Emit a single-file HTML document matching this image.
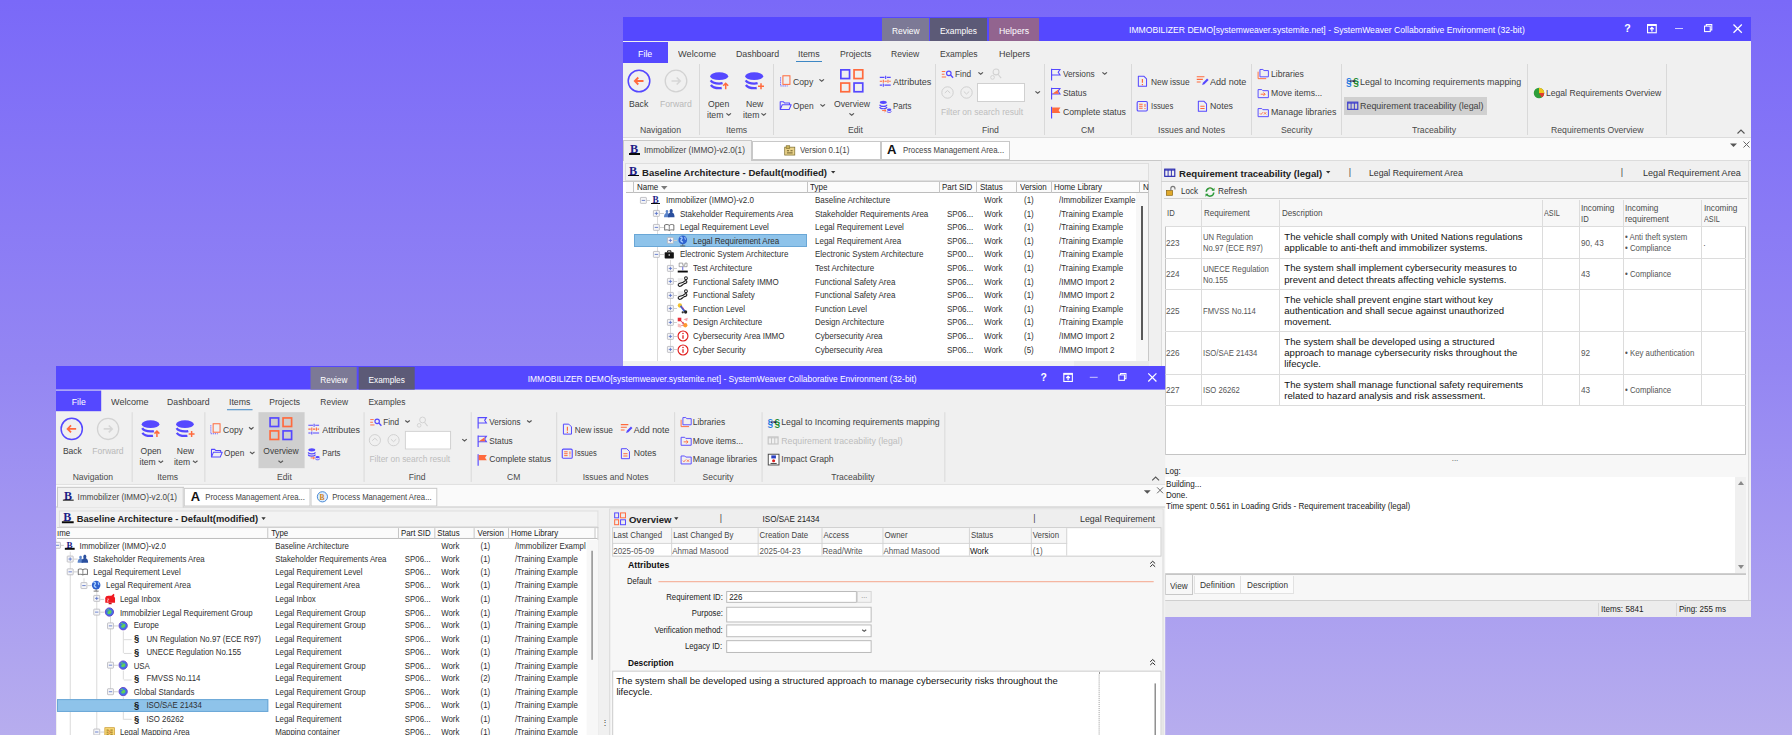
<!DOCTYPE html>
<html><head><meta charset="utf-8"><title>SystemWeaver</title><style>html,body{margin:0;padding:0}body{width:1792px;height:735px;overflow:hidden;position:relative;background:linear-gradient(180deg,#7a69f8 0%,#9486f3 50%,#b7adee 100%);font-family:"Liberation Sans",sans-serif}
.win{position:absolute;transform-origin:0 0;overflow:hidden}
.a{position:absolute}
.t{position:absolute;white-space:nowrap;transform-origin:0 50%}
svg{overflow:visible}</style></head><body>
<div class="win" style="left:622.5px;top:17px;width:1128.5px;height:599.5px;transform:scale(1);">
<div class="a " style="left:0px;top:0px;width:1128.5px;height:599.5px;background:#f0f0f0;"></div>
<div class="a " style="left:0px;top:0px;width:1128.5px;height:24px;background:#5548ff;"></div>
<div class="a " style="left:259.3px;top:0.6px;width:47.2px;height:23.4px;background:#7c7996;"></div>
<span class="t" style="left:269.15px;top:7.84px;font-size:9.6px;line-height:11.52px;color:#fff;transform:scaleX(0.874);">Review</span>
<div class="a " style="left:307.5px;top:0.6px;width:57.4px;height:23.4px;background:#5c5a77;"></div>
<span class="t" style="left:317.7px;top:7.84px;font-size:9.6px;line-height:11.52px;color:#fff;transform:scaleX(0.878);">Examples</span>
<div class="a " style="left:366.1px;top:0.6px;width:50.4px;height:23.4px;background:#92648f;"></div>
<span class="t" style="left:376.3px;top:7.84px;font-size:9.6px;line-height:11.52px;color:#fff;transform:scaleX(0.907);">Helpers</span>
<span class="t" style="left:506.5px;top:6.66px;font-size:9.4px;line-height:11.28px;color:#fff;transform:scaleX(0.919);">IMMOBILIZER DEMO[systemweaver.systemite.net] - SystemWeaver Collaborative Environment (32-bit)</span>
<span class="t" style="left:1001.76px;top:4.74px;font-size:10.6px;line-height:12.72px;color:#fff;transform:scaleX(1);font-weight:bold;">?</span>
<svg class="a" style="left:1024.5px;top:6.5px;" width="9.8" height="9.3" viewBox="0 0 9.8 9.3"><rect x=".55" y=".55" width="8.700" height="8.200" fill="none" stroke="#fff" stroke-width="1.100"/><path d="M.5 1.500h8.800" stroke="#fff" stroke-width="1"/><path d="M4.900 7.500V3.600M3.100 5.200l1.800-1.800 1.800 1.800" stroke="#fff" stroke-width="1.300" fill="none"/></svg>
<div class="a " style="left:1052.3px;top:10.85px;width:7.8px;height:1.1px;background:#cfcaff;"></div>
<svg class="a" style="left:1081.3px;top:7px;" width="8.4" height="8.2" viewBox="0 0 8.4 8.2"><rect x=".55" y="2.100" width="5.700" height="5.500" fill="none" stroke="#fff" stroke-width="1.050"/><path d="M2.300 2.100V.55h5.500v5.500H6.300" fill="none" stroke="#fff" stroke-width="1.050"/></svg>
<svg class="a" style="left:1110.7px;top:7px;" width="9.3" height="9.3" viewBox="0 0 9.3 9.3"><path d="M.5 .5l8.300 8.300M8.800 .5L.5 8.800" stroke="#fff" stroke-width="1.250"/></svg>
<div class="a " style="left:0px;top:25px;width:45.7px;height:20.6px;background:#5548ff;"></div>
<span class="t" style="left:15.65px;top:31.24px;font-size:9.6px;line-height:11.52px;color:#fff;transform:scaleX(0.925);">File</span>
<span class="t" style="left:55.8px;top:30.84px;font-size:9.6px;line-height:11.52px;color:#404040;transform:scaleX(0.959);">Welcome</span>
<span class="t" style="left:113.3px;top:30.84px;font-size:9.6px;line-height:11.52px;color:#404040;transform:scaleX(0.92);">Dashboard</span>
<span class="t" style="left:175.5px;top:30.84px;font-size:9.6px;line-height:11.52px;color:#404040;transform:scaleX(0.925);">Items</span>
<span class="t" style="left:217.2px;top:30.84px;font-size:9.6px;line-height:11.52px;color:#404040;transform:scaleX(0.903);">Projects</span>
<span class="t" style="left:268.8px;top:30.84px;font-size:9.6px;line-height:11.52px;color:#404040;transform:scaleX(0.896);">Review</span>
<span class="t" style="left:317.8px;top:30.84px;font-size:9.6px;line-height:11.52px;color:#404040;transform:scaleX(0.894);">Examples</span>
<span class="t" style="left:376px;top:30.84px;font-size:9.6px;line-height:11.52px;color:#404040;transform:scaleX(0.937);">Helpers</span>
<div class="a " style="left:173.5px;top:44px;width:26px;height:1.3px;background:#3d87c4;"></div>
<div class="a " style="left:76.8px;top:46.8px;width:1px;height:71.2px;background:#d9d9d9;"></div>
<div class="a " style="left:150.5px;top:46.8px;width:1px;height:71.2px;background:#d9d9d9;"></div>
<div class="a " style="left:312.7px;top:46.8px;width:1px;height:71.2px;background:#d9d9d9;"></div>
<div class="a " style="left:421.5px;top:46.8px;width:1px;height:71.2px;background:#d9d9d9;"></div>
<div class="a " style="left:508.6px;top:46.8px;width:1px;height:71.2px;background:#d9d9d9;"></div>
<div class="a " style="left:628.6px;top:46.8px;width:1px;height:71.2px;background:#d9d9d9;"></div>
<div class="a " style="left:718.3px;top:46.8px;width:1px;height:71.2px;background:#d9d9d9;"></div>
<div class="a " style="left:904.3px;top:46.8px;width:1px;height:71.2px;background:#d9d9d9;"></div>
<div class="a " style="left:1043.7px;top:46.8px;width:1px;height:71.2px;background:#d9d9d9;"></div>
<div class="a " style="left:0px;top:119.8px;width:1128.5px;height:1px;background:#dcdcdc;"></div>
<span class="t" style="left:17.16px;top:107.16px;font-size:9.4px;line-height:11.28px;color:#4a4a4a;transform:scaleX(0.925);">Navigation</span>
<span class="t" style="left:103.37px;top:107.16px;font-size:9.4px;line-height:11.28px;color:#4a4a4a;transform:scaleX(0.925);">Items</span>
<span class="t" style="left:225.01px;top:107.16px;font-size:9.4px;line-height:11.28px;color:#4a4a4a;transform:scaleX(0.925);">Edit</span>
<span class="t" style="left:359.24px;top:107.16px;font-size:9.4px;line-height:11.28px;color:#4a4a4a;transform:scaleX(0.925);">Find</span>
<span class="t" style="left:458.74px;top:107.16px;font-size:9.4px;line-height:11.28px;color:#4a4a4a;transform:scaleX(0.925);">CM</span>
<span class="t" style="left:535.91px;top:107.16px;font-size:9.4px;line-height:11.28px;color:#4a4a4a;transform:scaleX(0.925);">Issues and Notes</span>
<span class="t" style="left:658.39px;top:107.16px;font-size:9.4px;line-height:11.28px;color:#4a4a4a;transform:scaleX(0.925);">Security</span>
<span class="t" style="left:789.43px;top:107.16px;font-size:9.4px;line-height:11.28px;color:#4a4a4a;transform:scaleX(0.925);">Traceability</span>
<span class="t" style="left:928.11px;top:107.16px;font-size:9.4px;line-height:11.28px;color:#4a4a4a;transform:scaleX(0.925);">Requirements Overview</span>
<svg class="a" style="left:1114.5px;top:111.7px;" width="8" height="5" viewBox="0 0 8 5"><path d="M.500 4.500L4 1l3.500 3.500" fill="none" stroke="#555" stroke-width="1.100"/></svg>
<svg class="a" style="left:4.3px;top:52px;" width="24" height="24" viewBox="0 0 24 24"><circle cx="12" cy="12" r="10.800" fill="none" stroke="#5548ff" stroke-width="1.500"/><path d="M16.500 12H8M11.300 8.500L7.800 12l3.500 3.500" fill="none" stroke="#ff6a3d" stroke-width="1.800"/></svg>
<span class="t" style="left:6.63px;top:80.51px;font-size:9.4px;line-height:11.28px;color:#404040;transform:scaleX(0.925);">Back</span>
<svg class="a" style="left:41.4px;top:52px;" width="24" height="24" viewBox="0 0 24 24"><circle cx="12" cy="12" r="10.800" fill="none" stroke="#d2d2d2" stroke-width="1.300"/><path d="M7.500 12H16M12.700 8.500l3.500 3.500-3.500 3.500" fill="none" stroke="#d6d6d6" stroke-width="1.600"/></svg>
<span class="t" style="left:37.45px;top:80.51px;font-size:9.4px;line-height:11.28px;color:#b9b9b9;transform:scaleX(0.925);">Forward</span>
<svg class="a" style="left:87.2px;top:55.3px;" width="20" height="18" viewBox="0 0 20 18"><ellipse cx="9.200" cy="4.200" rx="9" ry="3.900" fill="#5548ff"/><path d="M.700 8.300c1.500 2.300 5 3.300 8.500 3.300 1.200 0 2.400-.1 3.400-.4M.900 13c1.500 2.200 5 3.200 8.300 3.200.9 0 1.700-.05 2.500-.2" fill="none" stroke="#5548ff" stroke-width="2.300"/><path d="M15.700 17.300v-5.800M13.200 13.800l2.500-2.500 2.500 2.500" stroke="#ff6a3d" stroke-width="1.500" fill="none"/></svg>
<span class="t" style="left:85.66px;top:80.51px;font-size:9.4px;line-height:11.28px;color:#404040;transform:scaleX(0.925);">Open</span>
<span class="t" style="left:84.89px;top:92.31px;font-size:9.4px;line-height:11.28px;color:#404040;transform:scaleX(0.925);">item</span>
<svg class="a" style="left:103.6px;top:96.45px;" width="5.4" height="3.7" viewBox="0 0 5.4 3.7"><path d="M.4 .4l2.3 1.9 2.3 -1.9" fill="none" stroke="#555" stroke-width="1.2"/></svg>
<svg class="a" style="left:122.3px;top:55.3px;" width="20" height="18" viewBox="0 0 20 18"><ellipse cx="9.200" cy="4.200" rx="9" ry="3.900" fill="#5548ff"/><path d="M.700 8.300c1.500 2.300 5 3.300 8.500 3.300 1.200 0 2.400-.1 3.400-.4M.900 13c1.500 2.200 5 3.200 8.300 3.200.9 0 1.700-.05 2.500-.2" fill="none" stroke="#5548ff" stroke-width="2.300"/><path d="M16 11.200v6M13 14.200h6" stroke="#ff6a3d" stroke-width="1.500" fill="none"/></svg>
<span class="t" style="left:123.1px;top:80.51px;font-size:9.4px;line-height:11.28px;color:#404040;transform:scaleX(0.925);">New</span>
<span class="t" style="left:120.49px;top:92.31px;font-size:9.4px;line-height:11.28px;color:#404040;transform:scaleX(0.925);">item</span>
<svg class="a" style="left:138.8px;top:96.45px;" width="5.4" height="3.7" viewBox="0 0 5.4 3.7"><path d="M.4 .4l2.3 1.9 2.3 -1.9" fill="none" stroke="#555" stroke-width="1.2"/></svg>
<svg class="a" style="left:156.45px;top:57.75px;" width="12.5" height="12.5" viewBox="0 0 16 16"><rect x="5" y="1" width="9" height="11" fill="none" stroke="#ff6a3d" stroke-width="1.300"/><path d="M2 3v11h9" fill="none" stroke="#5548ff" stroke-width="1.200" stroke-dasharray="1.500 1.200"/></svg>
<span class="t" style="left:170.2px;top:58.81px;font-size:9.4px;line-height:11.28px;color:#404040;transform:scaleX(0.925);">Copy</span>
<svg class="a" style="left:196.3px;top:61.95px;" width="5.4" height="3.7" viewBox="0 0 5.4 3.7"><path d="M.4 .4l2.3 1.9 2.3 -1.9" fill="none" stroke="#555" stroke-width="1.2"/></svg>
<svg class="a" style="left:156.6px;top:82.3px;" width="13" height="13" viewBox="0 0 16 16"><path d="M1.500 13V3.500h4l1.500 1.500h6v2M1.500 13l2.500-6h11l-2.500 6z" fill="none" stroke="#5548ff" stroke-width="1.300" stroke-linejoin="round"/></svg>
<span class="t" style="left:170.5px;top:83.31px;font-size:9.4px;line-height:11.28px;color:#404040;transform:scaleX(0.896);">Open</span>
<svg class="a" style="left:197.3px;top:86.65px;" width="5.4" height="3.7" viewBox="0 0 5.4 3.7"><path d="M.4 .4l2.3 1.9 2.3 -1.9" fill="none" stroke="#555" stroke-width="1.2"/></svg>
<svg class="a" style="left:217px;top:52.2px;" width="24" height="24" viewBox="0 0 24 24"><rect x="0.85" y="0.85" width="8.700" height="8.700" fill="none" stroke="#5548ff" stroke-width="1.700"/><rect x="14.05" y="0.85" width="8.700" height="8.700" fill="none" stroke="#ff6a3d" stroke-width="1.700"/><rect x="0.85" y="14.05" width="8.700" height="8.700" fill="none" stroke="#ff6a3d" stroke-width="1.700"/><rect x="14.05" y="14.05" width="8.700" height="8.700" fill="none" stroke="#5548ff" stroke-width="1.700"/></svg>
<span class="t" style="left:211.1px;top:80.51px;font-size:9.4px;line-height:11.28px;color:#404040;transform:scaleX(0.919);">Overview</span>
<svg class="a" style="left:226.4px;top:96.15px;" width="5.4" height="3.7" viewBox="0 0 5.4 3.7"><path d="M.4 .4l2.3 1.9 2.3 -1.9" fill="none" stroke="#555" stroke-width="1.2"/></svg>
<svg class="a" style="left:256.25px;top:58.25px;" width="12.5" height="12.5" viewBox="0 0 16 16"><path d="M1 3h6M10 3h5M1 13h3M7 13h8M8.500 1v4M5.500 11v4" stroke="#5548ff" stroke-width="1.400" fill="none"/><path d="M1 8h3M7 8h3M13 8h2M11.500 6v4M5.500 6v4" stroke="#ff6a3d" stroke-width="1.400" fill="none"/></svg>
<span class="t" style="left:270.5px;top:58.81px;font-size:9.4px;line-height:11.28px;color:#404040;transform:scaleX(0.97);">Attributes</span>
<svg class="a" style="left:256.25px;top:82.75px;" width="12.5" height="12.5" viewBox="0 0 16 16"><ellipse cx="5.500" cy="3" rx="4.500" ry="2.200" fill="#5548ff"/><path d="M1 6c0 1.300 2 2.200 4.500 2.200S10 7.300 10 6M1 9c0 1.300 2 2.200 4.500 2.200S10 10.300 10 9" fill="none" stroke="#5548ff" stroke-width="1.500"/><ellipse cx="13" cy="12.500" rx="2.800" ry="1.500" fill="#5548ff"/><path d="M10.200 14.500c0 .8 1.200 1.400 2.800 1.400s2.800-.6 2.800-1.400" fill="none" stroke="#5548ff" stroke-width="1.200"/><path d="M4 13.500h5M7 11.800l2 1.700-2 1.700" stroke="#ff6a3d" stroke-width="1.200" fill="none"/></svg>
<span class="t" style="left:270.5px;top:83.31px;font-size:9.4px;line-height:11.28px;color:#404040;transform:scaleX(0.843);">Parts</span>
<svg class="a" style="left:318.55px;top:51.05px;" width="12.5" height="12.5" viewBox="0 0 16 16"><path d="M1 4.500h4.500M1 8h3.500M1 11.500h5.500" stroke="#ff6a3d" stroke-width="1.200"/><circle cx="10" cy="6.800" r="2.900" fill="none" stroke="#5548ff" stroke-width="1.500"/><path d="M12.200 9l3.300 3.500" stroke="#5548ff" stroke-width="1.700"/></svg>
<span class="t" style="left:332.7px;top:51.31px;font-size:9.4px;line-height:11.28px;color:#404040;transform:scaleX(0.886);">Find</span>
<svg class="a" style="left:355.3px;top:55.25px;" width="5.4" height="3.7" viewBox="0 0 5.4 3.7"><path d="M.4 .4l2.3 1.9 2.3 -1.9" fill="none" stroke="#555" stroke-width="1.2"/></svg>
<svg class="a" style="left:366.25px;top:51.05px;" width="12.5" height="12.5" viewBox="0 0 16 16"><circle cx="9" cy="5" r="3.800" fill="none" stroke="#d2d2d2" stroke-width="1.300"/><path d="M11.500 8l4 5" stroke="#d2d2d2" stroke-width="1.400"/><circle cx="4.500" cy="12" r="2.400" fill="none" stroke="#d2d2d2" stroke-width="1.200"/></svg>
<svg class="a" style="left:318.4px;top:69.4px;" width="13" height="13" viewBox="0 0 13 13"><circle cx="6.500" cy="6.500" r="5.700" fill="none" stroke="#d0d0d0" stroke-width="1"/><path d="M3.800 7l2.700-2.500L9.200 7" fill="none" stroke="#d0d0d0" stroke-width="1"/></svg>
<svg class="a" style="left:337.3px;top:69.4px;" width="13" height="13" viewBox="0 0 13 13"><circle cx="6.500" cy="6.500" r="5.700" fill="none" stroke="#d0d0d0" stroke-width="1"/><path d="M3.800 5.500l2.700 2.500 2.700-2.500" fill="none" stroke="#d0d0d0" stroke-width="1"/></svg>
<div class="a " style="left:354.8px;top:66.4px;width:47.7px;height:18.6px;background:#fff;border:1px solid #d0d0d0;box-sizing:border-box;"></div>
<svg class="a" style="left:412.5px;top:74.15px;" width="5.4" height="3.7" viewBox="0 0 5.4 3.7"><path d="M.4 .4l2.3 1.9 2.3 -1.9" fill="none" stroke="#555" stroke-width="1.2"/></svg>
<span class="t" style="left:318.7px;top:89.11px;font-size:9.4px;line-height:11.28px;color:#bdbdbd;transform:scaleX(0.911);">Filter on search result</span>
<svg class="a" style="left:427.55px;top:51.35px;" width="12.5" height="12.5" viewBox="0 0 16 16"><path d="M2 1v15" stroke="#5548ff" stroke-width="1.500"/><path d="M2 2h10.800l-2.300 3.500 2.300 3.500H2" fill="none" stroke="#5548ff" stroke-width="1.400"/></svg>
<span class="t" style="left:440.8px;top:51.31px;font-size:9.4px;line-height:11.28px;color:#404040;transform:scaleX(0.879);">Versions</span>
<svg class="a" style="left:479px;top:55.25px;" width="5.4" height="3.7" viewBox="0 0 5.4 3.7"><path d="M.4 .4l2.3 1.9 2.3 -1.9" fill="none" stroke="#555" stroke-width="1.2"/></svg>
<svg class="a" style="left:427.55px;top:70.05px;" width="12.5" height="12.5" viewBox="0 0 16 16"><path d="M2 1v15" stroke="#5548ff" stroke-width="1.500"/><path d="M2 2h10.800l-2.300 3.500 2.300 3.500H2" fill="none" stroke="#5548ff" stroke-width="1.400"/><path d="M3 8.500L11.500 2.700 9.800 5.500l1.700 3z" fill="#ff6a3d"/></svg>
<span class="t" style="left:440.8px;top:70.31px;font-size:9.4px;line-height:11.28px;color:#404040;transform:scaleX(0.889);">Status</span>
<svg class="a" style="left:427.55px;top:88.75px;" width="12.5" height="12.5" viewBox="0 0 16 16"><path d="M2 1v15" stroke="#5548ff" stroke-width="1.500"/><path d="M2.700 2h10.600l-2.300 3.500 2.300 3.500H2.700z" fill="#ff6a3d"/></svg>
<span class="t" style="left:440.8px;top:89.11px;font-size:9.4px;line-height:11.28px;color:#404040;transform:scaleX(0.928);">Complete status</span>
<svg class="a" style="left:513.75px;top:57.75px;" width="12.5" height="12.5" viewBox="0 0 16 16"><path d="M3 1.500h7l3.500 3.500v9.500H3z" fill="none" stroke="#5548ff" stroke-width="1.300" stroke-linejoin="round"/><path d="M8.200 5v5M8.200 11.500v1.500" stroke="#ff6a3d" stroke-width="1.500"/></svg>
<span class="t" style="left:528.2px;top:58.61px;font-size:9.4px;line-height:11.28px;color:#404040;transform:scaleX(0.893);">New issue</span>
<svg class="a" style="left:573.5px;top:57px;" width="13" height="13" viewBox="0 0 17 16"><path d="M1 3h10M1 6.500h8M1 10h5" stroke="#ff6a3d" stroke-width="1.400"/><path d="M8 14l1-3 5.500-5.500 2 2L11 13z" fill="#5548ff"/></svg>
<span class="t" style="left:587.5px;top:58.61px;font-size:9.4px;line-height:11.28px;color:#404040;transform:scaleX(0.967);">Add note</span>
<svg class="a" style="left:513.75px;top:82.75px;" width="12.5" height="12.5" viewBox="0 0 16 16"><rect x="1.500" y="2" width="13" height="12" rx="1.500" fill="none" stroke="#5548ff" stroke-width="1.400"/><path d="M4 5.500h4.500M4 8h4.500M4 10.500h4.500M11.500 5v4M11.500 10.200v1.300" stroke="#ff6a3d" stroke-width="1.300"/></svg>
<span class="t" style="left:528.2px;top:83.31px;font-size:9.4px;line-height:11.28px;color:#404040;transform:scaleX(0.821);">Issues</span>
<svg class="a" style="left:573.45px;top:82.75px;" width="12.5" height="12.5" viewBox="0 0 16 16"><path d="M3 1.500h7l3.500 3.500v9.500H3z" fill="none" stroke="#5548ff" stroke-width="1.300" stroke-linejoin="round"/><path d="M5.500 8h5.500M5.500 11h5.500" stroke="#ff6a3d" stroke-width="1.300"/></svg>
<span class="t" style="left:587.5px;top:83.31px;font-size:9.4px;line-height:11.28px;color:#404040;transform:scaleX(0.937);">Notes</span>
<svg class="a" style="left:634.75px;top:50.55px;" width="12.5" height="12.5" viewBox="0 0 17 16"><path d="M4 1.500h4l1.500 1.500h6v8.500H4z" fill="none" stroke="#5548ff" stroke-width="1.300" stroke-linejoin="round"/><path d="M1.500 4.500V14h11" fill="none" stroke="#ff6a3d" stroke-width="1.300"/></svg>
<span class="t" style="left:648.2px;top:51.41px;font-size:9.4px;line-height:11.28px;color:#404040;transform:scaleX(0.915);">Libraries</span>
<svg class="a" style="left:634.75px;top:69.75px;" width="12.5" height="12.5" viewBox="0 0 17 16"><path d="M1.500 3h5l1.500 1.500h7.500V14H1.500z" fill="none" stroke="#5548ff" stroke-width="1.300" stroke-linejoin="round"/><path d="M5 9.300h6M8.800 7l2.300 2.300-2.300 2.300" stroke="#ff6a3d" stroke-width="1.300" fill="none"/></svg>
<span class="t" style="left:648.2px;top:70.21px;font-size:9.4px;line-height:11.28px;color:#404040;transform:scaleX(0.918);">Move items...</span>
<svg class="a" style="left:634.75px;top:88.55px;" width="12.5" height="12.5" viewBox="0 0 17 16"><path d="M1.500 3h5l1.500 1.500h7.500V14H1.500z" fill="none" stroke="#5548ff" stroke-width="1.300" stroke-linejoin="round"/><path d="M4 9.500l1.500 1.500 2.500-3M9.500 8l3 3M12.500 8l-3 3" stroke="#ff6a3d" stroke-width="1.200" fill="none"/></svg>
<span class="t" style="left:648.2px;top:88.91px;font-size:9.4px;line-height:11.28px;color:#404040;transform:scaleX(0.944);">Manage libraries</span>
<svg class="a" style="left:723.5px;top:57.5px;" width="13" height="13" viewBox="0 0 17 16"><text x="0" y="13.500" font-size="15" font-weight="bold" fill="#1f7ae0" font-family="Liberation Sans, sans-serif" textLength="7.500" lengthAdjust="spacingAndGlyphs">§</text><text x="9.500" y="13.500" font-size="15" font-weight="bold" fill="#16882a" font-family="Liberation Sans, sans-serif" textLength="7.500" lengthAdjust="spacingAndGlyphs">§</text><path d="M5 7.500h6.500" stroke="#1a1a4a" stroke-width="2.200"/><path d="M6 7.500h3" stroke="#fff" stroke-width=".8"/></svg>
<span class="t" style="left:737.8px;top:58.61px;font-size:9.4px;line-height:11.28px;color:#404040;transform:scaleX(0.949);">Legal to Incoming requirements mapping</span>
<div class="a " style="left:721px;top:79.7px;width:143.7px;height:18.1px;background:#d0d0d0;"></div>
<svg class="a" style="left:724.05px;top:83.25px;" width="11.5" height="11.5" viewBox="0 0 16 16"><rect x="1" y="3" width="14" height="10" fill="none" stroke="#3a3acc" stroke-width="1.600"/><path d="M1 4.300h14" stroke="#3a3acc" stroke-width="1.400"/><path d="M5.700 4v9M10.300 4v9" stroke="#3a3acc" stroke-width="1.300"/></svg>
<span class="t" style="left:737.8px;top:83.31px;font-size:9.4px;line-height:11.28px;color:#404040;transform:scaleX(0.952);">Requirement traceability (legal)</span>
<svg class="a" style="left:910.5px;top:70px;" width="12" height="12" viewBox="0 0 16 16"><circle cx="8" cy="8" r="7" fill="#2e9e3a"/><path d="M8 8V1a7 7 0 0 1 7 7z" fill="#f0c419"/><path d="M8 8h7a7 7 0 0 1-3.500 6z" fill="#e03a2f"/></svg>
<span class="t" style="left:923.8px;top:70.31px;font-size:9.4px;line-height:11.28px;color:#404040;transform:scaleX(0.917);">Legal Requirements Overview</span>
<div class="a " style="left:0px;top:121px;width:1128.5px;height:22.3px;background:#fafafa;"></div>
<div class="a " style="left:0px;top:142.8px;width:1128.5px;height:1px;background:#c8c8c8;"></div>
<div class="a " style="left:0.2px;top:123.3px;width:129.3px;height:21px;background:#f0f0f0;border:1px solid #c8c8c8;box-sizing:border-box;border-bottom:none;"></div>
<span class="t" style="left:7.39px;top:124.98px;font-size:12.2px;line-height:14.64px;color:#1c1c86;transform:scaleX(1);font-weight:bold;font-family:'Liberation Serif',serif;">B</span>
<div class="a " style="left:6px;top:135.65px;width:11.6px;height:1.9px;background:#0a0a0a;"></div>
<span class="t" style="left:21.3px;top:128.26px;font-size:8.9px;line-height:10.68px;color:#444;transform:scaleX(0.93);">Immobilizer (IMMO)-v2.0(1)</span>
<div class="a " style="left:129.5px;top:124.3px;width:129.2px;height:19px;background:#fff;border:1px solid #c8c8c8;box-sizing:border-box;"></div>
<svg class="a" style="left:161.15px;top:127.55px;" width="11.5" height="11.5" viewBox="0 0 16 16"><rect x="1" y="3" width="14" height="11" fill="#e9d28a" stroke="#7a6a2a" stroke-width="1"/><rect x="3" y="1" width="5" height="4" fill="#c9b15a" stroke="#7a6a2a" stroke-width=".8"/><path d="M4 8h3M9 8h3M4 11h8" stroke="#5a4a1a" stroke-width="1.200"/></svg>
<span class="t" style="left:177.1px;top:128.26px;font-size:8.9px;line-height:10.68px;color:#444;transform:scaleX(0.892);">Version 0.1(1)</span>
<div class="a " style="left:258.7px;top:124.3px;width:129.3px;height:19px;background:#fff;border:1px solid #c8c8c8;box-sizing:border-box;"></div>
<span class="t" style="left:264.96px;top:125.8px;font-size:12.5px;line-height:15px;color:#111;transform:scaleX(1.05);font-weight:bold;">A</span>
<span class="t" style="left:280.5px;top:128.26px;font-size:8.9px;line-height:10.68px;color:#444;transform:scaleX(0.883);">Process Management Area...</span>
<svg class="a" style="left:1107px;top:126.3px;" width="7" height="4" viewBox="0 0 7 4"><path d="M0 .500h7L3.500 4z" fill="#555"/></svg>
<svg class="a" style="left:1120px;top:123.8px;" width="7" height="7" viewBox="0 0 7 7"><path d="M.500 .500l6 6M6.500 .500l-6 6" stroke="#666" stroke-width="1"/></svg>
<div class="a " style="left:2.5px;top:146px;width:523.5px;height:18px;background:#f3f3f3;border:1px solid #dedede;box-sizing:border-box;"></div>
<span class="t" style="left:6.59px;top:146.88px;font-size:12.2px;line-height:14.64px;color:#1c1c86;transform:scaleX(1);font-weight:bold;font-family:'Liberation Serif',serif;">B</span>
<div class="a " style="left:5.2px;top:157.55px;width:11.6px;height:1.9px;background:#0a0a0a;"></div>
<span class="t" style="left:19.9px;top:149.9px;font-size:9.5px;line-height:11.4px;color:#222;transform:scaleX(1.006);font-weight:bold;">Baseline Architecture - Default(modified)</span>
<svg class="a" style="left:208px;top:153.5px;" width="4.4" height="2.6" viewBox="0 0 4.4 2.6"><path d="M0 0h4.400L2.200 2.600z" fill="#333"/></svg>
<div class="a " style="left:0.5px;top:164px;width:525.5px;height:179.7px;background:#fff;border:1px solid #c9c9c9;box-sizing:border-box;border-left:none;border-bottom:none;"></div>
<div class="a " style="left:0.5px;top:343.7px;width:525.5px;height:5.8px;background:#e9e9e9;"></div>
<div class="a " style="left:0.5px;top:343.7px;width:451px;height:5.8px;background:#f1f1f1;"></div>
<div class="a " style="left:3.5px;top:165px;width:521.5px;height:10.6px;background:#fbfbfb;"></div>
<div class="a " style="left:3.5px;top:175.3px;width:521.5px;height:1px;background:#bdbdbd;"></div>
<div class="a " style="left:10.6px;top:165px;width:1px;height:10.5px;background:#c4c4c4;"></div>
<div class="a " style="left:184.4px;top:165px;width:1px;height:10.5px;background:#c4c4c4;"></div>
<div class="a " style="left:316.7px;top:165px;width:1px;height:10.5px;background:#c4c4c4;"></div>
<div class="a " style="left:353.5px;top:165px;width:1px;height:10.5px;background:#c4c4c4;"></div>
<div class="a " style="left:393.3px;top:165px;width:1px;height:10.5px;background:#c4c4c4;"></div>
<div class="a " style="left:428.3px;top:165px;width:1px;height:10.5px;background:#c4c4c4;"></div>
<div class="a " style="left:516.7px;top:165px;width:1px;height:10.5px;background:#c4c4c4;"></div>
<span class="t" style="left:14.5px;top:165.38px;font-size:8.7px;line-height:10.44px;color:#222;transform:scaleX(0.92);">Name</span>
<span class="t" style="left:187.3px;top:165.38px;font-size:8.7px;line-height:10.44px;color:#222;transform:scaleX(0.92);">Type</span>
<span class="t" style="left:319.9px;top:165.38px;font-size:8.7px;line-height:10.44px;color:#222;transform:scaleX(0.92);">Part SID</span>
<span class="t" style="left:357px;top:165.38px;font-size:8.7px;line-height:10.44px;color:#222;transform:scaleX(0.92);">Status</span>
<span class="t" style="left:397.2px;top:165.38px;font-size:8.7px;line-height:10.44px;color:#222;transform:scaleX(0.92);">Version</span>
<span class="t" style="left:431.9px;top:165.38px;font-size:8.7px;line-height:10.44px;color:#222;transform:scaleX(0.92);">Home Library</span>
<span class="t" style="left:520.5px;top:165.38px;font-size:8.7px;line-height:10.44px;color:#222;transform:scaleX(0.92);">N</span>
<svg class="a" style="left:38.8px;top:169.2px;" width="6.5" height="3.8" viewBox="0 0 6.5 3.8"><path d="M0 0h6.500L3.250 3.800z" fill="#7a7a7a"/></svg>
<div class="a " style="left:34.4px;top:188px;width:1px;height:155.5px;background:#dadada;"></div>
<div class="a " style="left:47.8px;top:215px;width:1px;height:8.5px;background:#dadada;"></div>
<div class="a " style="left:47.8px;top:242.5px;width:1px;height:101px;background:#dadada;"></div>
<svg class="a" style="left:17px;top:179.6px;" width="6.8" height="6.8" viewBox="0 0 8 8"><rect x=".500" y=".500" width="7" height="7" rx=".600" fill="#f6f6f8" stroke="#b2b2b8" stroke-width=".9"/><path d="M2 4h4" stroke="#5570c8" stroke-width="1"/></svg>
<div class="a " style="left:24px;top:182.6px;width:3.8px;height:0.8px;background:#cfcfcf;"></div>
<span class="t" style="left:29.94px;top:177.52px;font-size:9.3px;line-height:11.16px;color:#1c1c86;transform:scaleX(1);font-weight:bold;font-family:'Liberation Serif',serif;">B</span>
<div class="a " style="left:28.6px;top:185.6px;width:9.4px;height:1.6px;background:#0a0a0a;"></div>
<span class="t" style="left:43.5px;top:178.08px;font-size:8.7px;line-height:10.44px;color:#303030;transform:scaleX(0.92);">Immobilizer (IMMO)-v2.0</span>
<span class="t" style="left:192.1px;top:178.08px;font-size:8.7px;line-height:10.44px;color:#303030;transform:scaleX(0.92);">Baseline Architecture</span>
<span class="t" style="left:361.5px;top:178.08px;font-size:8.7px;line-height:10.44px;color:#303030;transform:scaleX(0.92);">Work</span>
<span class="t" style="left:401.2px;top:178.08px;font-size:8.7px;line-height:10.44px;color:#303030;transform:scaleX(0.92);">(1)</span>
<span class="t" style="left:436.3px;top:178.08px;font-size:8.7px;line-height:10.44px;color:#303030;transform:scaleX(0.92);">/Immobilizer Example</span>
<svg class="a" style="left:30.6px;top:193.2px;" width="6.8" height="6.8" viewBox="0 0 8 8"><rect x=".500" y=".500" width="7" height="7" rx=".600" fill="#f6f6f8" stroke="#b2b2b8" stroke-width=".9"/><path d="M2 4h4M4 2v4" stroke="#5570c8" stroke-width="1"/></svg>
<div class="a " style="left:37.6px;top:196.2px;width:3.8px;height:0.8px;background:#cfcfcf;"></div>
<svg class="a" style="left:41.65px;top:191.35px;" width="10.5" height="10.5" viewBox="0 0 16 16"><path d="M0 14c0-3.500 1-6 3.500-6.500C2 6.500 2 3 4.500 3s2.500 3.500 1 4.500C8 8 8.500 10 8.500 14z" fill="#5b84c9"/><path d="M6 14c0-4 1-6.500 3.700-7C8 5.500 8.300 1.500 11 1.500s3 4 1.300 5.500C15 7.500 16 10 16 14z" fill="#2a4f9e"/></svg>
<span class="t" style="left:57.1px;top:191.68px;font-size:8.7px;line-height:10.44px;color:#303030;transform:scaleX(0.92);">Stakeholder Requirements Area</span>
<span class="t" style="left:192.1px;top:191.68px;font-size:8.7px;line-height:10.44px;color:#303030;transform:scaleX(0.92);">Stakeholder Requirements Area</span>
<span class="t" style="left:324.4px;top:191.68px;font-size:8.7px;line-height:10.44px;color:#303030;transform:scaleX(0.92);">SP06...</span>
<span class="t" style="left:361.5px;top:191.68px;font-size:8.7px;line-height:10.44px;color:#303030;transform:scaleX(0.92);">Work</span>
<span class="t" style="left:401.2px;top:191.68px;font-size:8.7px;line-height:10.44px;color:#303030;transform:scaleX(0.92);">(1)</span>
<span class="t" style="left:436.3px;top:191.68px;font-size:8.7px;line-height:10.44px;color:#303030;transform:scaleX(0.92);">/Training Example</span>
<svg class="a" style="left:30.6px;top:206.8px;" width="6.8" height="6.8" viewBox="0 0 8 8"><rect x=".500" y=".500" width="7" height="7" rx=".600" fill="#f6f6f8" stroke="#b2b2b8" stroke-width=".9"/><path d="M2 4h4" stroke="#5570c8" stroke-width="1"/></svg>
<div class="a " style="left:37.6px;top:209.8px;width:3.8px;height:0.8px;background:#cfcfcf;"></div>
<svg class="a" style="left:41.65px;top:204.95px;" width="10.5" height="10.5" viewBox="0 0 16 16"><path d="M1 4.500c2.500-1 5-1 7 .5 2-1.500 4.500-1.500 7-.5v8c-2.500-.8-5-.8-7 .5-2-1.300-4.500-1.300-7-.5z" fill="#fff" stroke="#4a4a4a" stroke-width="1.200"/><path d="M8 5v8" stroke="#4a4a4a" stroke-width="1"/></svg>
<span class="t" style="left:57.1px;top:205.28px;font-size:8.7px;line-height:10.44px;color:#303030;transform:scaleX(0.92);">Legal Requirement Level</span>
<span class="t" style="left:192.1px;top:205.28px;font-size:8.7px;line-height:10.44px;color:#303030;transform:scaleX(0.92);">Legal Requirement Level</span>
<span class="t" style="left:324.4px;top:205.28px;font-size:8.7px;line-height:10.44px;color:#303030;transform:scaleX(0.92);">SP06...</span>
<span class="t" style="left:361.5px;top:205.28px;font-size:8.7px;line-height:10.44px;color:#303030;transform:scaleX(0.92);">Work</span>
<span class="t" style="left:401.2px;top:205.28px;font-size:8.7px;line-height:10.44px;color:#303030;transform:scaleX(0.92);">(1)</span>
<span class="t" style="left:436.3px;top:205.28px;font-size:8.7px;line-height:10.44px;color:#303030;transform:scaleX(0.92);">/Training Example</span>
<div class="a " style="left:11.1px;top:217.2px;width:173.2px;height:13px;background:#8ec3ea;border:1px solid #6aa7d6;box-sizing:border-box;"></div>
<svg class="a" style="left:44.2px;top:220.4px;" width="6.8" height="6.8" viewBox="0 0 8 8"><rect x=".500" y=".500" width="7" height="7" rx=".600" fill="#f6f6f8" stroke="#b2b2b8" stroke-width=".9"/><path d="M2 4h4M4 2v4" stroke="#5570c8" stroke-width="1"/></svg>
<div class="a " style="left:51.2px;top:223.4px;width:3.8px;height:0.8px;background:#cfcfcf;"></div>
<svg class="a" style="left:54.75px;top:218.05px;" width="11.5" height="11.5" viewBox="0 0 16 16"><circle cx="8" cy="6.800" r="6" fill="#2f62cf"/><path d="M4.500 3.500c1.500-1.500 3 0 2.500 1.500s-2 1.500-1.500 3 2 1 2.500 2.500" stroke="#a8d0ff" stroke-width="1.800" fill="none"/><path d="M10.500 3c1 1 .5 2.500 1.500 3.500" stroke="#a8d0ff" stroke-width="1.400" fill="none"/><path d="M8 12.800v2M4.500 15.200h7" stroke="#444" stroke-width="1"/></svg>
<span class="t" style="left:70.7px;top:218.88px;font-size:8.7px;line-height:10.44px;color:#303030;transform:scaleX(0.92);">Legal Requirement Area</span>
<span class="t" style="left:192.1px;top:218.88px;font-size:8.7px;line-height:10.44px;color:#303030;transform:scaleX(0.92);">Legal Requirement Area</span>
<span class="t" style="left:324.4px;top:218.88px;font-size:8.7px;line-height:10.44px;color:#303030;transform:scaleX(0.92);">SP06...</span>
<span class="t" style="left:361.5px;top:218.88px;font-size:8.7px;line-height:10.44px;color:#303030;transform:scaleX(0.92);">Work</span>
<span class="t" style="left:401.2px;top:218.88px;font-size:8.7px;line-height:10.44px;color:#303030;transform:scaleX(0.92);">(1)</span>
<span class="t" style="left:436.3px;top:218.88px;font-size:8.7px;line-height:10.44px;color:#303030;transform:scaleX(0.92);">/Training Example</span>
<svg class="a" style="left:30.6px;top:234px;" width="6.8" height="6.8" viewBox="0 0 8 8"><rect x=".500" y=".500" width="7" height="7" rx=".600" fill="#f6f6f8" stroke="#b2b2b8" stroke-width=".9"/><path d="M2 4h4" stroke="#5570c8" stroke-width="1"/></svg>
<div class="a " style="left:37.6px;top:237px;width:3.8px;height:0.8px;background:#cfcfcf;"></div>
<svg class="a" style="left:41.65px;top:232.15px;" width="10.5" height="10.5" viewBox="0 0 16 16"><rect x="1" y="5" width="14" height="9.500" rx="1" fill="#151515"/><path d="M5.500 5V2.800h5V5" fill="none" stroke="#151515" stroke-width="1.500"/><rect x="7" y="8" width="2" height="2.200" fill="#e8e8e8"/></svg>
<span class="t" style="left:57.1px;top:232.48px;font-size:8.7px;line-height:10.44px;color:#303030;transform:scaleX(0.92);">Electronic System Architecture</span>
<span class="t" style="left:192.1px;top:232.48px;font-size:8.7px;line-height:10.44px;color:#303030;transform:scaleX(0.92);">Electronic System Architecture</span>
<span class="t" style="left:324.4px;top:232.48px;font-size:8.7px;line-height:10.44px;color:#303030;transform:scaleX(0.92);">SP00...</span>
<span class="t" style="left:361.5px;top:232.48px;font-size:8.7px;line-height:10.44px;color:#303030;transform:scaleX(0.92);">Work</span>
<span class="t" style="left:401.2px;top:232.48px;font-size:8.7px;line-height:10.44px;color:#303030;transform:scaleX(0.92);">(1)</span>
<span class="t" style="left:436.3px;top:232.48px;font-size:8.7px;line-height:10.44px;color:#303030;transform:scaleX(0.92);">/Training Example</span>
<svg class="a" style="left:44.2px;top:247.6px;" width="6.8" height="6.8" viewBox="0 0 8 8"><rect x=".500" y=".500" width="7" height="7" rx=".600" fill="#f6f6f8" stroke="#b2b2b8" stroke-width=".9"/><path d="M2 4h4M4 2v4" stroke="#5570c8" stroke-width="1"/></svg>
<div class="a " style="left:51.2px;top:250.6px;width:3.8px;height:0.8px;background:#cfcfcf;"></div>
<svg class="a" style="left:54.75px;top:245.25px;" width="11.5" height="11.5" viewBox="0 0 16 16"><path d="M3 1.500h5v3h3v-3h3M3 1.500v5h11v-5" fill="none" stroke="#777" stroke-width=".9"/><path d="M8 6.500v5" stroke="#6a6ae0" stroke-width="1.400"/><path d="M1 13.300h14" stroke="#0a0a0a" stroke-width="2.600"/></svg>
<span class="t" style="left:70.7px;top:246.08px;font-size:8.7px;line-height:10.44px;color:#303030;transform:scaleX(0.92);">Test Architecture</span>
<span class="t" style="left:192.1px;top:246.08px;font-size:8.7px;line-height:10.44px;color:#303030;transform:scaleX(0.92);">Test Architecture</span>
<span class="t" style="left:324.4px;top:246.08px;font-size:8.7px;line-height:10.44px;color:#303030;transform:scaleX(0.92);">SP06...</span>
<span class="t" style="left:361.5px;top:246.08px;font-size:8.7px;line-height:10.44px;color:#303030;transform:scaleX(0.92);">Work</span>
<span class="t" style="left:401.2px;top:246.08px;font-size:8.7px;line-height:10.44px;color:#303030;transform:scaleX(0.92);">(1)</span>
<span class="t" style="left:436.3px;top:246.08px;font-size:8.7px;line-height:10.44px;color:#303030;transform:scaleX(0.92);">/Training Example</span>
<svg class="a" style="left:44.2px;top:261.2px;" width="6.8" height="6.8" viewBox="0 0 8 8"><rect x=".500" y=".500" width="7" height="7" rx=".600" fill="#f6f6f8" stroke="#b2b2b8" stroke-width=".9"/><path d="M2 4h4M4 2v4" stroke="#5570c8" stroke-width="1"/></svg>
<div class="a " style="left:51.2px;top:264.2px;width:3.8px;height:0.8px;background:#cfcfcf;"></div>
<svg class="a" style="left:54.75px;top:258.85px;" width="11.5" height="11.5" viewBox="0 0 16 16"><rect x="1" y="3" width="8" height="8" fill="#ececec"/><path d="M2 13.500c-1-1.500 0-3 2-3.500l4-1c2-.5 2-2 3.500-2.500 2-.6 3 1.500 1.500 3-1 1-2 .5-3.500 1.500S7 13 5.500 14 3 14.500 2 13.500z" fill="#fff" stroke="#1a1a1a" stroke-width="1.500"/><circle cx="12.500" cy="3" r="1.900" fill="#fff" stroke="#1a1a1a" stroke-width="1.400"/></svg>
<span class="t" style="left:70.7px;top:259.68px;font-size:8.7px;line-height:10.44px;color:#303030;transform:scaleX(0.92);">Functional Safety IMMO</span>
<span class="t" style="left:192.1px;top:259.68px;font-size:8.7px;line-height:10.44px;color:#303030;transform:scaleX(0.92);">Functional Safety Area</span>
<span class="t" style="left:324.4px;top:259.68px;font-size:8.7px;line-height:10.44px;color:#303030;transform:scaleX(0.92);">SP06...</span>
<span class="t" style="left:361.5px;top:259.68px;font-size:8.7px;line-height:10.44px;color:#303030;transform:scaleX(0.92);">Work</span>
<span class="t" style="left:401.2px;top:259.68px;font-size:8.7px;line-height:10.44px;color:#303030;transform:scaleX(0.92);">(1)</span>
<span class="t" style="left:436.3px;top:259.68px;font-size:8.7px;line-height:10.44px;color:#303030;transform:scaleX(0.92);">/IMMO Import 2</span>
<svg class="a" style="left:44.2px;top:274.8px;" width="6.8" height="6.8" viewBox="0 0 8 8"><rect x=".500" y=".500" width="7" height="7" rx=".600" fill="#f6f6f8" stroke="#b2b2b8" stroke-width=".9"/><path d="M2 4h4M4 2v4" stroke="#5570c8" stroke-width="1"/></svg>
<div class="a " style="left:51.2px;top:277.8px;width:3.8px;height:0.8px;background:#cfcfcf;"></div>
<svg class="a" style="left:54.75px;top:272.45px;" width="11.5" height="11.5" viewBox="0 0 16 16"><rect x="1" y="3" width="8" height="8" fill="#ececec"/><path d="M2 13.500c-1-1.500 0-3 2-3.500l4-1c2-.5 2-2 3.500-2.500 2-.6 3 1.500 1.500 3-1 1-2 .5-3.500 1.500S7 13 5.500 14 3 14.500 2 13.500z" fill="#fff" stroke="#1a1a1a" stroke-width="1.500"/><circle cx="12.500" cy="3" r="1.900" fill="#fff" stroke="#1a1a1a" stroke-width="1.400"/></svg>
<span class="t" style="left:70.7px;top:273.28px;font-size:8.7px;line-height:10.44px;color:#303030;transform:scaleX(0.92);">Functional Safety</span>
<span class="t" style="left:192.1px;top:273.28px;font-size:8.7px;line-height:10.44px;color:#303030;transform:scaleX(0.92);">Functional Safety Area</span>
<span class="t" style="left:324.4px;top:273.28px;font-size:8.7px;line-height:10.44px;color:#303030;transform:scaleX(0.92);">SP06...</span>
<span class="t" style="left:361.5px;top:273.28px;font-size:8.7px;line-height:10.44px;color:#303030;transform:scaleX(0.92);">Work</span>
<span class="t" style="left:401.2px;top:273.28px;font-size:8.7px;line-height:10.44px;color:#303030;transform:scaleX(0.92);">(1)</span>
<span class="t" style="left:436.3px;top:273.28px;font-size:8.7px;line-height:10.44px;color:#303030;transform:scaleX(0.92);">/IMMO Import 2</span>
<svg class="a" style="left:44.2px;top:288.4px;" width="6.8" height="6.8" viewBox="0 0 8 8"><rect x=".500" y=".500" width="7" height="7" rx=".600" fill="#f6f6f8" stroke="#b2b2b8" stroke-width=".9"/><path d="M2 4h4M4 2v4" stroke="#5570c8" stroke-width="1"/></svg>
<div class="a " style="left:51.2px;top:291.4px;width:3.8px;height:0.8px;background:#cfcfcf;"></div>
<svg class="a" style="left:54.75px;top:286.05px;" width="11.5" height="11.5" viewBox="0 0 16 16"><circle cx="4" cy="3.500" r="3" fill="#f2c230"/><path d="M5 4l6 8" stroke="#3a5fd0" stroke-width="2.400"/><path d="M7 5l3 4" stroke="#e04a7a" stroke-width="1.200"/><circle cx="12" cy="12.500" r="2.300" fill="#222"/><circle cx="8" cy="13" r="1.600" fill="#333"/></svg>
<span class="t" style="left:70.7px;top:286.88px;font-size:8.7px;line-height:10.44px;color:#303030;transform:scaleX(0.92);">Function Level</span>
<span class="t" style="left:192.1px;top:286.88px;font-size:8.7px;line-height:10.44px;color:#303030;transform:scaleX(0.92);">Function Level</span>
<span class="t" style="left:324.4px;top:286.88px;font-size:8.7px;line-height:10.44px;color:#303030;transform:scaleX(0.92);">SP06...</span>
<span class="t" style="left:361.5px;top:286.88px;font-size:8.7px;line-height:10.44px;color:#303030;transform:scaleX(0.92);">Work</span>
<span class="t" style="left:401.2px;top:286.88px;font-size:8.7px;line-height:10.44px;color:#303030;transform:scaleX(0.92);">(1)</span>
<span class="t" style="left:436.3px;top:286.88px;font-size:8.7px;line-height:10.44px;color:#303030;transform:scaleX(0.92);">/Training Example</span>
<svg class="a" style="left:44.2px;top:302px;" width="6.8" height="6.8" viewBox="0 0 8 8"><rect x=".500" y=".500" width="7" height="7" rx=".600" fill="#f6f6f8" stroke="#b2b2b8" stroke-width=".9"/><path d="M2 4h4M4 2v4" stroke="#5570c8" stroke-width="1"/></svg>
<div class="a " style="left:51.2px;top:305px;width:3.8px;height:0.8px;background:#cfcfcf;"></div>
<svg class="a" style="left:54.75px;top:299.65px;" width="11.5" height="11.5" viewBox="0 0 16 16"><path d="M1 1h5v5H1z" fill="#e8303a"/><path d="M9 3l6-2-1 5z" fill="#f4a0a8"/><path d="M1 9l4 1 1 5-5-1z" fill="#f7c0c0"/><circle cx="11.500" cy="11.500" r="3" fill="#ff9a30"/><path d="M5 5l5 5M6 12l3-1" stroke="#d03040" stroke-width="1"/><circle cx="8" cy="8" r="1.500" fill="#e05060"/></svg>
<span class="t" style="left:70.7px;top:300.48px;font-size:8.7px;line-height:10.44px;color:#303030;transform:scaleX(0.92);">Design Architecture</span>
<span class="t" style="left:192.1px;top:300.48px;font-size:8.7px;line-height:10.44px;color:#303030;transform:scaleX(0.92);">Design Architecture</span>
<span class="t" style="left:324.4px;top:300.48px;font-size:8.7px;line-height:10.44px;color:#303030;transform:scaleX(0.92);">SP06...</span>
<span class="t" style="left:361.5px;top:300.48px;font-size:8.7px;line-height:10.44px;color:#303030;transform:scaleX(0.92);">Work</span>
<span class="t" style="left:401.2px;top:300.48px;font-size:8.7px;line-height:10.44px;color:#303030;transform:scaleX(0.92);">(1)</span>
<span class="t" style="left:436.3px;top:300.48px;font-size:8.7px;line-height:10.44px;color:#303030;transform:scaleX(0.92);">/Training Example</span>
<svg class="a" style="left:44.2px;top:315.6px;" width="6.8" height="6.8" viewBox="0 0 8 8"><rect x=".500" y=".500" width="7" height="7" rx=".600" fill="#f6f6f8" stroke="#b2b2b8" stroke-width=".9"/><path d="M2 4h4M4 2v4" stroke="#5570c8" stroke-width="1"/></svg>
<div class="a " style="left:51.2px;top:318.6px;width:3.8px;height:0.8px;background:#cfcfcf;"></div>
<svg class="a" style="left:54.5px;top:313px;" width="12" height="12" viewBox="0 0 16 16"><circle cx="8" cy="8" r="6.600" fill="#fff" stroke="#e01b1b" stroke-width="1.500"/><path d="M8 7v4.800" stroke="#e01b1b" stroke-width="1.700"/><circle cx="8" cy="4.600" r="1.050" fill="#e01b1b"/></svg>
<span class="t" style="left:70.7px;top:314.08px;font-size:8.7px;line-height:10.44px;color:#303030;transform:scaleX(0.92);">Cybersecurity Area IMMO</span>
<span class="t" style="left:192.1px;top:314.08px;font-size:8.7px;line-height:10.44px;color:#303030;transform:scaleX(0.92);">Cybersecurity Area</span>
<span class="t" style="left:324.4px;top:314.08px;font-size:8.7px;line-height:10.44px;color:#303030;transform:scaleX(0.92);">SP06...</span>
<span class="t" style="left:361.5px;top:314.08px;font-size:8.7px;line-height:10.44px;color:#303030;transform:scaleX(0.92);">Work</span>
<span class="t" style="left:401.2px;top:314.08px;font-size:8.7px;line-height:10.44px;color:#303030;transform:scaleX(0.92);">(1)</span>
<span class="t" style="left:436.3px;top:314.08px;font-size:8.7px;line-height:10.44px;color:#303030;transform:scaleX(0.92);">/IMMO Import 2</span>
<svg class="a" style="left:44.2px;top:329.2px;" width="6.8" height="6.8" viewBox="0 0 8 8"><rect x=".500" y=".500" width="7" height="7" rx=".600" fill="#f6f6f8" stroke="#b2b2b8" stroke-width=".9"/><path d="M2 4h4M4 2v4" stroke="#5570c8" stroke-width="1"/></svg>
<div class="a " style="left:51.2px;top:332.2px;width:3.8px;height:0.8px;background:#cfcfcf;"></div>
<svg class="a" style="left:54.5px;top:326.6px;" width="12" height="12" viewBox="0 0 16 16"><circle cx="8" cy="8" r="6.600" fill="#fff" stroke="#e01b1b" stroke-width="1.500"/><path d="M8 7v4.800" stroke="#e01b1b" stroke-width="1.700"/><circle cx="8" cy="4.600" r="1.050" fill="#e01b1b"/></svg>
<span class="t" style="left:70.7px;top:327.68px;font-size:8.7px;line-height:10.44px;color:#303030;transform:scaleX(0.92);">Cyber Security</span>
<span class="t" style="left:192.1px;top:327.68px;font-size:8.7px;line-height:10.44px;color:#303030;transform:scaleX(0.92);">Cybersecurity Area</span>
<span class="t" style="left:324.4px;top:327.68px;font-size:8.7px;line-height:10.44px;color:#303030;transform:scaleX(0.92);">SP06...</span>
<span class="t" style="left:361.5px;top:327.68px;font-size:8.7px;line-height:10.44px;color:#303030;transform:scaleX(0.92);">Work</span>
<span class="t" style="left:401.2px;top:327.68px;font-size:8.7px;line-height:10.44px;color:#303030;transform:scaleX(0.92);">(5)</span>
<span class="t" style="left:436.3px;top:327.68px;font-size:8.7px;line-height:10.44px;color:#303030;transform:scaleX(0.92);">/IMMO Import 2</span>
<div class="a " style="left:513.8px;top:176.3px;width:11.7px;height:167.4px;background:#f7f7f7;"></div>
<div class="a " style="left:518.7px;top:189px;width:1.7px;height:134px;background:#5a5a5a;"></div>
<div class="a " style="left:538px;top:143.4px;width:588px;height:439.6px;background:#f7f7f7;border:1px solid #dcdcdc;box-sizing:border-box;border-bottom:none;"></div>
<div class="a " style="left:539px;top:144.4px;width:586px;height:20px;background:#f0f0f0;"></div>
<div class="a " style="left:538.5px;top:163.9px;width:587px;height:1px;background:#d2d2d2;"></div>
<div class="a " style="left:539px;top:165px;width:586px;height:16.7px;background:#f5f5f5;"></div>
<div class="a " style="left:541.5px;top:181.4px;width:583px;height:1px;background:#d0d0d0;"></div>
<svg class="a" style="left:541.75px;top:150.05px;" width="11.5" height="11.5" viewBox="0 0 16 16"><rect x="1" y="3" width="14" height="10" fill="none" stroke="#2a2ab0" stroke-width="1.600"/><path d="M1 4.300h14" stroke="#2a2ab0" stroke-width="1.400"/><path d="M5.700 4v9M10.300 4v9" stroke="#2a2ab0" stroke-width="1.300"/></svg>
<span class="t" style="left:556.9px;top:150.9px;font-size:9.5px;line-height:11.4px;color:#222;transform:scaleX(1.012);font-weight:bold;">Requirement traceability (legal)</span>
<svg class="a" style="left:703.1px;top:154.3px;" width="4.4" height="2.6" viewBox="0 0 4.4 2.6"><path d="M0 0h4.400L2.200 2.600z" fill="#333"/></svg>
<span class="t" style="left:726.33px;top:150.4px;font-size:9px;line-height:10.8px;color:#444;transform:scaleX(1);">|</span>
<span class="t" style="left:746.5px;top:150.36px;font-size:9.4px;line-height:11.28px;color:#333;transform:scaleX(0.927);">Legal Requirement Area</span>
<span class="t" style="left:998.33px;top:150.4px;font-size:9px;line-height:10.8px;color:#444;transform:scaleX(1);">|</span>
<span class="t" style="left:1020.5px;top:150.36px;font-size:9.4px;line-height:11.28px;color:#333;transform:scaleX(0.967);">Legal Requirement Area</span>
<svg class="a" style="left:542.8px;top:168px;" width="11" height="11" viewBox="0 0 16 16"><rect x="2" y="8" width="9" height="7" fill="#e0a92c" stroke="#8a6510" stroke-width="1"/><path d="M8.500 8V5a3 3 0 0 1 6 0v1.500" fill="none" stroke="#777" stroke-width="1.600"/></svg>
<span class="t" style="left:558.5px;top:168.68px;font-size:9.2px;line-height:11.04px;color:#333;transform:scaleX(0.875);">Lock</span>
<svg class="a" style="left:581px;top:167.5px;" width="12" height="12" viewBox="0 0 16 16"><path d="M3 9a5 5 0 0 1 9.500-2M13 10a5 5 0 0 1-9.500 2" fill="none" stroke="#2d9a3a" stroke-width="2"/><path d="M10 7.500h4v-4zM6 11.500H2v4z" fill="#2d9a3a"/><circle cx="8" cy="4" r="1.500" fill="#8a6"/></svg>
<span class="t" style="left:595.5px;top:168.68px;font-size:9.2px;line-height:11.04px;color:#333;transform:scaleX(0.9);">Refresh</span>
<div class="a " style="left:542.2px;top:182.6px;width:581.8px;height:255.4px;background:#fff;border:1px solid #c4c4c4;box-sizing:border-box;"></div>
<div class="a " style="left:542.7px;top:183.1px;width:580.8px;height:26.3px;background:#f7f7f7;"></div>
<div class="a " style="left:542.5px;top:208.9px;width:581px;height:1px;background:#dcdcdc;"></div>
<div class="a " style="left:542.5px;top:240.5px;width:581px;height:1px;background:#dcdcdc;"></div>
<div class="a " style="left:542.5px;top:271.7px;width:581px;height:1px;background:#dcdcdc;"></div>
<div class="a " style="left:542.5px;top:313.9px;width:581px;height:1px;background:#dcdcdc;"></div>
<div class="a " style="left:542.5px;top:356.5px;width:581px;height:1px;background:#dcdcdc;"></div>
<div class="a " style="left:542.5px;top:387.8px;width:581px;height:1px;background:#dcdcdc;"></div>
<div class="a " style="left:578.4px;top:183px;width:1px;height:205.3px;background:#dcdcdc;"></div>
<div class="a " style="left:656.7px;top:183px;width:1px;height:205.3px;background:#dcdcdc;"></div>
<div class="a " style="left:919.3px;top:183px;width:1px;height:205.3px;background:#dcdcdc;"></div>
<div class="a " style="left:956.4px;top:183px;width:1px;height:205.3px;background:#dcdcdc;"></div>
<div class="a " style="left:1000.4px;top:183px;width:1px;height:205.3px;background:#dcdcdc;"></div>
<div class="a " style="left:1078.3px;top:183px;width:1px;height:205.3px;background:#dcdcdc;"></div>
<span class="t" style="left:544px;top:191.46px;font-size:8.4px;line-height:10.08px;color:#4a4a4a;transform:scaleX(0.92);">ID</span>
<span class="t" style="left:581px;top:191.46px;font-size:8.4px;line-height:10.08px;color:#4a4a4a;transform:scaleX(0.956);">Requirement</span>
<span class="t" style="left:659.7px;top:191.46px;font-size:8.4px;line-height:10.08px;color:#4a4a4a;transform:scaleX(0.964);">Description</span>
<span class="t" style="left:921.5px;top:191.46px;font-size:8.4px;line-height:10.08px;color:#4a4a4a;transform:scaleX(0.862);">ASIL</span>
<span class="t" style="left:958.7px;top:185.76px;font-size:8.4px;line-height:10.08px;color:#4a4a4a;transform:scaleX(0.983);">Incoming</span>
<span class="t" style="left:958.7px;top:196.96px;font-size:8.4px;line-height:10.08px;color:#4a4a4a;transform:scaleX(0.92);">ID</span>
<span class="t" style="left:1002.8px;top:185.76px;font-size:8.4px;line-height:10.08px;color:#4a4a4a;transform:scaleX(0.983);">Incoming</span>
<span class="t" style="left:1002.8px;top:196.96px;font-size:8.4px;line-height:10.08px;color:#4a4a4a;transform:scaleX(0.982);">requirement</span>
<span class="t" style="left:1081px;top:185.76px;font-size:8.4px;line-height:10.08px;color:#4a4a4a;transform:scaleX(0.983);">Incoming</span>
<span class="t" style="left:1081px;top:196.96px;font-size:8.4px;line-height:10.08px;color:#4a4a4a;transform:scaleX(0.862);">ASIL</span>
<span class="t" style="left:543.5px;top:220.84px;font-size:8.6px;line-height:10.32px;color:#555;transform:scaleX(0.95);">223</span>
<span class="t" style="left:580.8px;top:215.14px;font-size:8.6px;line-height:10.32px;color:#555;transform:scaleX(0.895);">UN Regulation</span>
<span class="t" style="left:580.8px;top:226.34px;font-size:8.6px;line-height:10.32px;color:#555;transform:scaleX(0.895);">No.97 (ECE R97)</span>
<span class="t" style="left:661.8px;top:214.07px;font-size:9.55px;line-height:11.46px;color:#111;transform:scaleX(1);">The vehicle shall comply with United Nations regulations</span>
<span class="t" style="left:661.8px;top:225.27px;font-size:9.55px;line-height:11.46px;color:#111;transform:scaleX(1);">applicable to anti-theft and immobilizer systems.</span>
<span class="t" style="left:958.5px;top:220.84px;font-size:8.6px;line-height:10.32px;color:#555;transform:scaleX(0.95);">90, 43</span>
<span class="t" style="left:1002.5px;top:215.14px;font-size:8.6px;line-height:10.32px;color:#555;transform:scaleX(0.91);">• Anti theft system</span>
<span class="t" style="left:1002.5px;top:226.34px;font-size:8.6px;line-height:10.32px;color:#555;transform:scaleX(0.91);">• Compliance</span>
<span class="t" style="left:543.5px;top:252.24px;font-size:8.6px;line-height:10.32px;color:#555;transform:scaleX(0.95);">224</span>
<span class="t" style="left:580.8px;top:246.54px;font-size:8.6px;line-height:10.32px;color:#555;transform:scaleX(0.895);">UNECE Regulation</span>
<span class="t" style="left:580.8px;top:257.74px;font-size:8.6px;line-height:10.32px;color:#555;transform:scaleX(0.895);">No.155</span>
<span class="t" style="left:661.8px;top:245.47px;font-size:9.55px;line-height:11.46px;color:#111;transform:scaleX(1);">The system shall implement cybersecurity measures to</span>
<span class="t" style="left:661.8px;top:256.67px;font-size:9.55px;line-height:11.46px;color:#111;transform:scaleX(1);">prevent and detect threats affecting vehicle systems.</span>
<span class="t" style="left:958.5px;top:252.24px;font-size:8.6px;line-height:10.32px;color:#555;transform:scaleX(0.95);">43</span>
<span class="t" style="left:1002.5px;top:252.14px;font-size:8.6px;line-height:10.32px;color:#555;transform:scaleX(0.91);">• Compliance</span>
<span class="t" style="left:543.5px;top:288.94px;font-size:8.6px;line-height:10.32px;color:#555;transform:scaleX(0.95);">225</span>
<span class="t" style="left:580.8px;top:288.84px;font-size:8.6px;line-height:10.32px;color:#555;transform:scaleX(0.895);">FMVSS No.114</span>
<span class="t" style="left:661.8px;top:276.57px;font-size:9.55px;line-height:11.46px;color:#111;transform:scaleX(1);">The vehicle shall prevent engine start without key</span>
<span class="t" style="left:661.8px;top:287.77px;font-size:9.55px;line-height:11.46px;color:#111;transform:scaleX(1);">authentication and shall secue against unauthorized</span>
<span class="t" style="left:661.8px;top:298.97px;font-size:9.55px;line-height:11.46px;color:#111;transform:scaleX(1);">movement.</span>
<span class="t" style="left:543.5px;top:331.34px;font-size:8.6px;line-height:10.32px;color:#555;transform:scaleX(0.95);">226</span>
<span class="t" style="left:580.8px;top:331.24px;font-size:8.6px;line-height:10.32px;color:#555;transform:scaleX(0.895);">ISO/SAE 21434</span>
<span class="t" style="left:661.8px;top:318.97px;font-size:9.55px;line-height:11.46px;color:#111;transform:scaleX(1);">The system shall be developed using a structured</span>
<span class="t" style="left:661.8px;top:330.17px;font-size:9.55px;line-height:11.46px;color:#111;transform:scaleX(1);">approach to manage cybersecurity risks throughout the</span>
<span class="t" style="left:661.8px;top:341.37px;font-size:9.55px;line-height:11.46px;color:#111;transform:scaleX(1);">lifecycle.</span>
<span class="t" style="left:958.5px;top:331.34px;font-size:8.6px;line-height:10.32px;color:#555;transform:scaleX(0.95);">92</span>
<span class="t" style="left:1002.5px;top:331.24px;font-size:8.6px;line-height:10.32px;color:#555;transform:scaleX(0.91);">• Key authentication</span>
<span class="t" style="left:543.5px;top:368.29px;font-size:8.6px;line-height:10.32px;color:#555;transform:scaleX(0.95);">227</span>
<span class="t" style="left:580.8px;top:368.19px;font-size:8.6px;line-height:10.32px;color:#555;transform:scaleX(0.895);">ISO 26262</span>
<span class="t" style="left:661.8px;top:361.52px;font-size:9.55px;line-height:11.46px;color:#111;transform:scaleX(1);">The system shall manage functional safety requirements</span>
<span class="t" style="left:661.8px;top:372.72px;font-size:9.55px;line-height:11.46px;color:#111;transform:scaleX(1);">related to hazard analysis and risk assessment.</span>
<span class="t" style="left:958.5px;top:368.29px;font-size:8.6px;line-height:10.32px;color:#555;transform:scaleX(0.95);">43</span>
<span class="t" style="left:1002.5px;top:368.19px;font-size:8.6px;line-height:10.32px;color:#555;transform:scaleX(0.91);">• Compliance</span>
<span class="t" style="left:1080.8px;top:221.34px;font-size:8.6px;line-height:10.32px;color:#555;transform:scaleX(1);">.</span>
<span class="t" style="left:829.17px;top:436.8px;font-size:8px;line-height:9.6px;color:#444;transform:scaleX(1);">...</span>
<span class="t" style="left:542.5px;top:448.68px;font-size:8.7px;line-height:10.44px;color:#222;transform:scaleX(0.93);">Log:</span>
<div class="a " style="left:542.2px;top:459.5px;width:581.8px;height:97.3px;background:#fff;border:1px solid #d0d0d0;box-sizing:border-box;border-left:none;border-top:none;"></div>
<div class="a " style="left:1112.2px;top:460px;width:11.3px;height:96.3px;background:#f0f0f0;"></div>
<svg class="a" style="left:1115px;top:464px;" width="6" height="4" viewBox="0 0 6 4"><path d="M0 4h6L3 0z" fill="#8a8a8a"/></svg>
<svg class="a" style="left:1115px;top:548px;" width="6" height="4" viewBox="0 0 6 4"><path d="M0 0h6L3 4z" fill="#8a8a8a"/></svg>
<span class="t" style="left:543px;top:461.58px;font-size:8.7px;line-height:10.44px;color:#222;transform:scaleX(0.93);">Building...</span>
<span class="t" style="left:543px;top:472.68px;font-size:8.7px;line-height:10.44px;color:#222;transform:scaleX(0.93);">Done.</span>
<span class="t" style="left:543px;top:483.78px;font-size:8.7px;line-height:10.44px;color:#222;transform:scaleX(0.929);">Time spent: 0.561 in Loading Grids - Requirement traceability (legal)</span>
<div class="a " style="left:542.2px;top:556.5px;width:581.8px;height:1.6px;background:#c6c6c6;"></div>
<div class="a " style="left:542.2px;top:558px;width:28.8px;height:20px;background:#f7f7f7;border:1px solid #c8c8c8;box-sizing:border-box;border-top:none;"></div>
<div class="a " style="left:571px;top:558.5px;width:47.2px;height:18.5px;background:#fbfbfb;border:1px solid #e2e2e2;box-sizing:border-box;border-top:none;"></div>
<div class="a " style="left:618.2px;top:558.5px;width:53.3px;height:18.5px;background:#fbfbfb;border:1px solid #e2e2e2;box-sizing:border-box;border-top:none;border-left:none;"></div>
<span class="t" style="left:547px;top:563.52px;font-size:8.8px;line-height:10.56px;color:#333;transform:scaleX(0.93);">View</span>
<span class="t" style="left:577px;top:563.02px;font-size:8.8px;line-height:10.56px;color:#333;transform:scaleX(0.954);">Definition</span>
<span class="t" style="left:624.5px;top:563.02px;font-size:8.8px;line-height:10.56px;color:#333;transform:scaleX(0.931);">Description</span>
<div class="a " style="left:542.2px;top:582.8px;width:586.3px;height:1px;background:#cfcfcf;"></div>
<div class="a " style="left:542.2px;top:584px;width:586.3px;height:15.5px;background:#ececec;"></div>
<div class="a " style="left:975px;top:586px;width:1px;height:13px;background:#d6d6d6;"></div>
<div class="a " style="left:1053px;top:586px;width:1px;height:13px;background:#d6d6d6;"></div>
<span class="t" style="left:978.9px;top:587.42px;font-size:8.8px;line-height:10.56px;color:#222;transform:scaleX(0.924);">Items: 5841</span>
<span class="t" style="left:1056.5px;top:587.42px;font-size:8.8px;line-height:10.56px;color:#222;transform:scaleX(0.915);">Ping: 255 ms</span>
</div>
<div class="win" style="left:55.8px;top:366px;width:1128.5px;height:599.5px;transform:scale(0.9827);">
<div class="a " style="left:0px;top:0px;width:1128.5px;height:599.5px;background:#f0f0f0;"></div>
<div class="a " style="left:0px;top:0px;width:1128.5px;height:24px;background:#5548ff;"></div>
<div class="a " style="left:259.3px;top:0.6px;width:47.2px;height:23.4px;background:#7c7996;"></div>
<span class="t" style="left:269.15px;top:7.84px;font-size:9.6px;line-height:11.52px;color:#fff;transform:scaleX(0.874);">Review</span>
<div class="a " style="left:307.5px;top:0.6px;width:57.4px;height:23.4px;background:#5c5a77;"></div>
<span class="t" style="left:317.7px;top:7.84px;font-size:9.6px;line-height:11.52px;color:#fff;transform:scaleX(0.878);">Examples</span>
<span class="t" style="left:480.1px;top:6.66px;font-size:9.4px;line-height:11.28px;color:#fff;transform:scaleX(0.919);">IMMOBILIZER DEMO[systemweaver.systemite.net] - SystemWeaver Collaborative Environment (32-bit)</span>
<span class="t" style="left:1001.76px;top:4.74px;font-size:10.6px;line-height:12.72px;color:#fff;transform:scaleX(1);font-weight:bold;">?</span>
<svg class="a" style="left:1024.5px;top:6.5px;" width="9.8" height="9.3" viewBox="0 0 9.8 9.3"><rect x=".55" y=".55" width="8.700" height="8.200" fill="none" stroke="#fff" stroke-width="1.100"/><path d="M.5 1.500h8.800" stroke="#fff" stroke-width="1"/><path d="M4.900 7.500V3.600M3.100 5.200l1.800-1.800 1.800 1.800" stroke="#fff" stroke-width="1.300" fill="none"/></svg>
<div class="a " style="left:1052.3px;top:10.85px;width:7.8px;height:1.1px;background:#cfcaff;"></div>
<svg class="a" style="left:1081.3px;top:7px;" width="8.4" height="8.2" viewBox="0 0 8.4 8.2"><rect x=".55" y="2.100" width="5.700" height="5.500" fill="none" stroke="#fff" stroke-width="1.050"/><path d="M2.300 2.100V.55h5.500v5.500H6.300" fill="none" stroke="#fff" stroke-width="1.050"/></svg>
<svg class="a" style="left:1110.7px;top:7px;" width="9.3" height="9.3" viewBox="0 0 9.3 9.3"><path d="M.5 .5l8.300 8.300M8.800 .5L.5 8.800" stroke="#fff" stroke-width="1.250"/></svg>
<div class="a " style="left:0px;top:25px;width:45.7px;height:20.6px;background:#5548ff;"></div>
<span class="t" style="left:15.65px;top:31.24px;font-size:9.6px;line-height:11.52px;color:#fff;transform:scaleX(0.925);">File</span>
<span class="t" style="left:55.8px;top:30.84px;font-size:9.6px;line-height:11.52px;color:#404040;transform:scaleX(0.959);">Welcome</span>
<span class="t" style="left:113.3px;top:30.84px;font-size:9.6px;line-height:11.52px;color:#404040;transform:scaleX(0.92);">Dashboard</span>
<span class="t" style="left:175.5px;top:30.84px;font-size:9.6px;line-height:11.52px;color:#404040;transform:scaleX(0.925);">Items</span>
<span class="t" style="left:217.2px;top:30.84px;font-size:9.6px;line-height:11.52px;color:#404040;transform:scaleX(0.903);">Projects</span>
<span class="t" style="left:268.8px;top:30.84px;font-size:9.6px;line-height:11.52px;color:#404040;transform:scaleX(0.896);">Review</span>
<span class="t" style="left:317.8px;top:30.84px;font-size:9.6px;line-height:11.52px;color:#404040;transform:scaleX(0.894);">Examples</span>
<div class="a " style="left:173.5px;top:44px;width:26px;height:1.3px;background:#3d87c4;"></div>
<div class="a " style="left:76.8px;top:46.8px;width:1px;height:71.2px;background:#d9d9d9;"></div>
<div class="a " style="left:150.5px;top:46.8px;width:1px;height:71.2px;background:#d9d9d9;"></div>
<div class="a " style="left:312.7px;top:46.8px;width:1px;height:71.2px;background:#d9d9d9;"></div>
<div class="a " style="left:421.5px;top:46.8px;width:1px;height:71.2px;background:#d9d9d9;"></div>
<div class="a " style="left:508.6px;top:46.8px;width:1px;height:71.2px;background:#d9d9d9;"></div>
<div class="a " style="left:628.6px;top:46.8px;width:1px;height:71.2px;background:#d9d9d9;"></div>
<div class="a " style="left:718.3px;top:46.8px;width:1px;height:71.2px;background:#d9d9d9;"></div>
<div class="a " style="left:904.3px;top:46.8px;width:1px;height:71.2px;background:#d9d9d9;"></div>
<div class="a " style="left:0px;top:119.8px;width:1128.5px;height:1px;background:#dcdcdc;"></div>
<span class="t" style="left:17.16px;top:107.16px;font-size:9.4px;line-height:11.28px;color:#4a4a4a;transform:scaleX(0.925);">Navigation</span>
<span class="t" style="left:103.37px;top:107.16px;font-size:9.4px;line-height:11.28px;color:#4a4a4a;transform:scaleX(0.925);">Items</span>
<span class="t" style="left:225.01px;top:107.16px;font-size:9.4px;line-height:11.28px;color:#4a4a4a;transform:scaleX(0.925);">Edit</span>
<span class="t" style="left:359.24px;top:107.16px;font-size:9.4px;line-height:11.28px;color:#4a4a4a;transform:scaleX(0.925);">Find</span>
<span class="t" style="left:458.74px;top:107.16px;font-size:9.4px;line-height:11.28px;color:#4a4a4a;transform:scaleX(0.925);">CM</span>
<span class="t" style="left:535.91px;top:107.16px;font-size:9.4px;line-height:11.28px;color:#4a4a4a;transform:scaleX(0.925);">Issues and Notes</span>
<span class="t" style="left:658.39px;top:107.16px;font-size:9.4px;line-height:11.28px;color:#4a4a4a;transform:scaleX(0.925);">Security</span>
<span class="t" style="left:789.43px;top:107.16px;font-size:9.4px;line-height:11.28px;color:#4a4a4a;transform:scaleX(0.925);">Traceability</span>
<svg class="a" style="left:1114.5px;top:111.7px;" width="8" height="5" viewBox="0 0 8 5"><path d="M.500 4.500L4 1l3.500 3.500" fill="none" stroke="#555" stroke-width="1.100"/></svg>
<svg class="a" style="left:4.3px;top:52px;" width="24" height="24" viewBox="0 0 24 24"><circle cx="12" cy="12" r="10.800" fill="none" stroke="#5548ff" stroke-width="1.500"/><path d="M16.500 12H8M11.300 8.500L7.800 12l3.500 3.500" fill="none" stroke="#ff6a3d" stroke-width="1.800"/></svg>
<span class="t" style="left:6.63px;top:80.51px;font-size:9.4px;line-height:11.28px;color:#404040;transform:scaleX(0.925);">Back</span>
<svg class="a" style="left:41.4px;top:52px;" width="24" height="24" viewBox="0 0 24 24"><circle cx="12" cy="12" r="10.800" fill="none" stroke="#d2d2d2" stroke-width="1.300"/><path d="M7.500 12H16M12.700 8.500l3.500 3.500-3.500 3.500" fill="none" stroke="#d6d6d6" stroke-width="1.600"/></svg>
<span class="t" style="left:37.45px;top:80.51px;font-size:9.4px;line-height:11.28px;color:#b9b9b9;transform:scaleX(0.925);">Forward</span>
<svg class="a" style="left:87.2px;top:55.3px;" width="20" height="18" viewBox="0 0 20 18"><ellipse cx="9.200" cy="4.200" rx="9" ry="3.900" fill="#5548ff"/><path d="M.700 8.300c1.500 2.300 5 3.300 8.500 3.300 1.200 0 2.400-.1 3.400-.4M.900 13c1.500 2.200 5 3.200 8.300 3.200.9 0 1.700-.05 2.500-.2" fill="none" stroke="#5548ff" stroke-width="2.300"/><path d="M15.700 17.300v-5.800M13.200 13.800l2.500-2.500 2.500 2.500" stroke="#ff6a3d" stroke-width="1.500" fill="none"/></svg>
<span class="t" style="left:85.66px;top:80.51px;font-size:9.4px;line-height:11.28px;color:#404040;transform:scaleX(0.925);">Open</span>
<span class="t" style="left:84.89px;top:92.31px;font-size:9.4px;line-height:11.28px;color:#404040;transform:scaleX(0.925);">item</span>
<svg class="a" style="left:103.6px;top:96.45px;" width="5.4" height="3.7" viewBox="0 0 5.4 3.7"><path d="M.4 .4l2.3 1.9 2.3 -1.9" fill="none" stroke="#555" stroke-width="1.2"/></svg>
<svg class="a" style="left:122.3px;top:55.3px;" width="20" height="18" viewBox="0 0 20 18"><ellipse cx="9.200" cy="4.200" rx="9" ry="3.900" fill="#5548ff"/><path d="M.700 8.300c1.500 2.300 5 3.300 8.500 3.300 1.200 0 2.400-.1 3.400-.4M.900 13c1.500 2.200 5 3.200 8.300 3.200.9 0 1.700-.05 2.500-.2" fill="none" stroke="#5548ff" stroke-width="2.300"/><path d="M16 11.200v6M13 14.200h6" stroke="#ff6a3d" stroke-width="1.500" fill="none"/></svg>
<span class="t" style="left:123.1px;top:80.51px;font-size:9.4px;line-height:11.28px;color:#404040;transform:scaleX(0.925);">New</span>
<span class="t" style="left:120.49px;top:92.31px;font-size:9.4px;line-height:11.28px;color:#404040;transform:scaleX(0.925);">item</span>
<svg class="a" style="left:138.8px;top:96.45px;" width="5.4" height="3.7" viewBox="0 0 5.4 3.7"><path d="M.4 .4l2.3 1.9 2.3 -1.9" fill="none" stroke="#555" stroke-width="1.2"/></svg>
<svg class="a" style="left:156.45px;top:57.75px;" width="12.5" height="12.5" viewBox="0 0 16 16"><rect x="5" y="1" width="9" height="11" fill="none" stroke="#ff6a3d" stroke-width="1.300"/><path d="M2 3v11h9" fill="none" stroke="#5548ff" stroke-width="1.200" stroke-dasharray="1.500 1.200"/></svg>
<span class="t" style="left:170.2px;top:58.81px;font-size:9.4px;line-height:11.28px;color:#404040;transform:scaleX(0.925);">Copy</span>
<svg class="a" style="left:196.3px;top:61.95px;" width="5.4" height="3.7" viewBox="0 0 5.4 3.7"><path d="M.4 .4l2.3 1.9 2.3 -1.9" fill="none" stroke="#555" stroke-width="1.2"/></svg>
<svg class="a" style="left:156.6px;top:82.3px;" width="13" height="13" viewBox="0 0 16 16"><path d="M1.500 13V3.500h4l1.500 1.500h6v2M1.500 13l2.500-6h11l-2.500 6z" fill="none" stroke="#5548ff" stroke-width="1.300" stroke-linejoin="round"/></svg>
<span class="t" style="left:170.5px;top:83.31px;font-size:9.4px;line-height:11.28px;color:#404040;transform:scaleX(0.896);">Open</span>
<svg class="a" style="left:197.3px;top:86.65px;" width="5.4" height="3.7" viewBox="0 0 5.4 3.7"><path d="M.4 .4l2.3 1.9 2.3 -1.9" fill="none" stroke="#555" stroke-width="1.2"/></svg>
<div class="a " style="left:205.9px;top:47.1px;width:47.5px;height:56.8px;background:#cfcfcf;"></div>
<svg class="a" style="left:217px;top:52.2px;" width="24" height="24" viewBox="0 0 24 24"><rect x="0.85" y="0.85" width="8.700" height="8.700" fill="none" stroke="#5548ff" stroke-width="1.700"/><rect x="14.05" y="0.85" width="8.700" height="8.700" fill="none" stroke="#ff6a3d" stroke-width="1.700"/><rect x="0.85" y="14.05" width="8.700" height="8.700" fill="none" stroke="#ff6a3d" stroke-width="1.700"/><rect x="14.05" y="14.05" width="8.700" height="8.700" fill="none" stroke="#5548ff" stroke-width="1.700"/></svg>
<span class="t" style="left:211.1px;top:80.51px;font-size:9.4px;line-height:11.28px;color:#404040;transform:scaleX(0.919);">Overview</span>
<svg class="a" style="left:226.4px;top:96.15px;" width="5.4" height="3.7" viewBox="0 0 5.4 3.7"><path d="M.4 .4l2.3 1.9 2.3 -1.9" fill="none" stroke="#555" stroke-width="1.2"/></svg>
<svg class="a" style="left:256.25px;top:58.25px;" width="12.5" height="12.5" viewBox="0 0 16 16"><path d="M1 3h6M10 3h5M1 13h3M7 13h8M8.500 1v4M5.500 11v4" stroke="#5548ff" stroke-width="1.400" fill="none"/><path d="M1 8h3M7 8h3M13 8h2M11.500 6v4M5.500 6v4" stroke="#ff6a3d" stroke-width="1.400" fill="none"/></svg>
<span class="t" style="left:270.5px;top:58.81px;font-size:9.4px;line-height:11.28px;color:#404040;transform:scaleX(0.97);">Attributes</span>
<svg class="a" style="left:256.25px;top:82.75px;" width="12.5" height="12.5" viewBox="0 0 16 16"><ellipse cx="5.500" cy="3" rx="4.500" ry="2.200" fill="#5548ff"/><path d="M1 6c0 1.300 2 2.200 4.500 2.200S10 7.300 10 6M1 9c0 1.300 2 2.200 4.500 2.200S10 10.300 10 9" fill="none" stroke="#5548ff" stroke-width="1.500"/><ellipse cx="13" cy="12.500" rx="2.800" ry="1.500" fill="#5548ff"/><path d="M10.200 14.500c0 .8 1.200 1.400 2.800 1.400s2.800-.6 2.800-1.400" fill="none" stroke="#5548ff" stroke-width="1.200"/><path d="M4 13.500h5M7 11.800l2 1.700-2 1.700" stroke="#ff6a3d" stroke-width="1.200" fill="none"/></svg>
<span class="t" style="left:270.5px;top:83.31px;font-size:9.4px;line-height:11.28px;color:#404040;transform:scaleX(0.843);">Parts</span>
<svg class="a" style="left:318.55px;top:51.05px;" width="12.5" height="12.5" viewBox="0 0 16 16"><path d="M1 4.500h4.500M1 8h3.500M1 11.500h5.500" stroke="#ff6a3d" stroke-width="1.200"/><circle cx="10" cy="6.800" r="2.900" fill="none" stroke="#5548ff" stroke-width="1.500"/><path d="M12.200 9l3.300 3.500" stroke="#5548ff" stroke-width="1.700"/></svg>
<span class="t" style="left:332.7px;top:51.31px;font-size:9.4px;line-height:11.28px;color:#404040;transform:scaleX(0.886);">Find</span>
<svg class="a" style="left:355.3px;top:55.25px;" width="5.4" height="3.7" viewBox="0 0 5.4 3.7"><path d="M.4 .4l2.3 1.9 2.3 -1.9" fill="none" stroke="#555" stroke-width="1.2"/></svg>
<svg class="a" style="left:366.25px;top:51.05px;" width="12.5" height="12.5" viewBox="0 0 16 16"><circle cx="9" cy="5" r="3.800" fill="none" stroke="#d2d2d2" stroke-width="1.300"/><path d="M11.500 8l4 5" stroke="#d2d2d2" stroke-width="1.400"/><circle cx="4.500" cy="12" r="2.400" fill="none" stroke="#d2d2d2" stroke-width="1.200"/></svg>
<svg class="a" style="left:318.4px;top:69.4px;" width="13" height="13" viewBox="0 0 13 13"><circle cx="6.500" cy="6.500" r="5.700" fill="none" stroke="#d0d0d0" stroke-width="1"/><path d="M3.800 7l2.700-2.500L9.200 7" fill="none" stroke="#d0d0d0" stroke-width="1"/></svg>
<svg class="a" style="left:337.3px;top:69.4px;" width="13" height="13" viewBox="0 0 13 13"><circle cx="6.500" cy="6.500" r="5.700" fill="none" stroke="#d0d0d0" stroke-width="1"/><path d="M3.800 5.500l2.700 2.500 2.700-2.500" fill="none" stroke="#d0d0d0" stroke-width="1"/></svg>
<div class="a " style="left:354.8px;top:66.4px;width:47.7px;height:18.6px;background:#fff;border:1px solid #d0d0d0;box-sizing:border-box;"></div>
<svg class="a" style="left:412.5px;top:74.15px;" width="5.4" height="3.7" viewBox="0 0 5.4 3.7"><path d="M.4 .4l2.3 1.9 2.3 -1.9" fill="none" stroke="#555" stroke-width="1.2"/></svg>
<span class="t" style="left:318.7px;top:89.11px;font-size:9.4px;line-height:11.28px;color:#bdbdbd;transform:scaleX(0.911);">Filter on search result</span>
<svg class="a" style="left:427.55px;top:51.35px;" width="12.5" height="12.5" viewBox="0 0 16 16"><path d="M2 1v15" stroke="#5548ff" stroke-width="1.500"/><path d="M2 2h10.800l-2.300 3.500 2.300 3.500H2" fill="none" stroke="#5548ff" stroke-width="1.400"/></svg>
<span class="t" style="left:440.8px;top:51.31px;font-size:9.4px;line-height:11.28px;color:#404040;transform:scaleX(0.879);">Versions</span>
<svg class="a" style="left:479px;top:55.25px;" width="5.4" height="3.7" viewBox="0 0 5.4 3.7"><path d="M.4 .4l2.3 1.9 2.3 -1.9" fill="none" stroke="#555" stroke-width="1.2"/></svg>
<svg class="a" style="left:427.55px;top:70.05px;" width="12.5" height="12.5" viewBox="0 0 16 16"><path d="M2 1v15" stroke="#5548ff" stroke-width="1.500"/><path d="M2 2h10.800l-2.300 3.500 2.300 3.500H2" fill="none" stroke="#5548ff" stroke-width="1.400"/><path d="M3 8.500L11.500 2.700 9.800 5.500l1.700 3z" fill="#ff6a3d"/></svg>
<span class="t" style="left:440.8px;top:70.31px;font-size:9.4px;line-height:11.28px;color:#404040;transform:scaleX(0.889);">Status</span>
<svg class="a" style="left:427.55px;top:88.75px;" width="12.5" height="12.5" viewBox="0 0 16 16"><path d="M2 1v15" stroke="#5548ff" stroke-width="1.500"/><path d="M2.700 2h10.600l-2.300 3.500 2.300 3.500H2.700z" fill="#ff6a3d"/></svg>
<span class="t" style="left:440.8px;top:89.11px;font-size:9.4px;line-height:11.28px;color:#404040;transform:scaleX(0.928);">Complete status</span>
<svg class="a" style="left:513.75px;top:57.75px;" width="12.5" height="12.5" viewBox="0 0 16 16"><path d="M3 1.500h7l3.500 3.500v9.500H3z" fill="none" stroke="#5548ff" stroke-width="1.300" stroke-linejoin="round"/><path d="M8.200 5v5M8.200 11.500v1.500" stroke="#ff6a3d" stroke-width="1.500"/></svg>
<span class="t" style="left:528.2px;top:58.61px;font-size:9.4px;line-height:11.28px;color:#404040;transform:scaleX(0.893);">New issue</span>
<svg class="a" style="left:573.5px;top:57px;" width="13" height="13" viewBox="0 0 17 16"><path d="M1 3h10M1 6.500h8M1 10h5" stroke="#ff6a3d" stroke-width="1.400"/><path d="M8 14l1-3 5.500-5.500 2 2L11 13z" fill="#5548ff"/></svg>
<span class="t" style="left:587.5px;top:58.61px;font-size:9.4px;line-height:11.28px;color:#404040;transform:scaleX(0.967);">Add note</span>
<svg class="a" style="left:513.75px;top:82.75px;" width="12.5" height="12.5" viewBox="0 0 16 16"><rect x="1.500" y="2" width="13" height="12" rx="1.500" fill="none" stroke="#5548ff" stroke-width="1.400"/><path d="M4 5.500h4.500M4 8h4.500M4 10.500h4.500M11.500 5v4M11.500 10.200v1.300" stroke="#ff6a3d" stroke-width="1.300"/></svg>
<span class="t" style="left:528.2px;top:83.31px;font-size:9.4px;line-height:11.28px;color:#404040;transform:scaleX(0.821);">Issues</span>
<svg class="a" style="left:573.45px;top:82.75px;" width="12.5" height="12.5" viewBox="0 0 16 16"><path d="M3 1.500h7l3.500 3.500v9.500H3z" fill="none" stroke="#5548ff" stroke-width="1.300" stroke-linejoin="round"/><path d="M5.500 8h5.500M5.500 11h5.500" stroke="#ff6a3d" stroke-width="1.300"/></svg>
<span class="t" style="left:587.5px;top:83.31px;font-size:9.4px;line-height:11.28px;color:#404040;transform:scaleX(0.937);">Notes</span>
<svg class="a" style="left:634.75px;top:50.55px;" width="12.5" height="12.5" viewBox="0 0 17 16"><path d="M4 1.500h4l1.500 1.500h6v8.500H4z" fill="none" stroke="#5548ff" stroke-width="1.300" stroke-linejoin="round"/><path d="M1.500 4.500V14h11" fill="none" stroke="#ff6a3d" stroke-width="1.300"/></svg>
<span class="t" style="left:648.2px;top:51.41px;font-size:9.4px;line-height:11.28px;color:#404040;transform:scaleX(0.915);">Libraries</span>
<svg class="a" style="left:634.75px;top:69.75px;" width="12.5" height="12.5" viewBox="0 0 17 16"><path d="M1.500 3h5l1.500 1.500h7.500V14H1.500z" fill="none" stroke="#5548ff" stroke-width="1.300" stroke-linejoin="round"/><path d="M5 9.300h6M8.800 7l2.300 2.300-2.300 2.300" stroke="#ff6a3d" stroke-width="1.300" fill="none"/></svg>
<span class="t" style="left:648.2px;top:70.21px;font-size:9.4px;line-height:11.28px;color:#404040;transform:scaleX(0.918);">Move items...</span>
<svg class="a" style="left:634.75px;top:88.55px;" width="12.5" height="12.5" viewBox="0 0 17 16"><path d="M1.500 3h5l1.500 1.500h7.500V14H1.500z" fill="none" stroke="#5548ff" stroke-width="1.300" stroke-linejoin="round"/><path d="M4 9.500l1.500 1.500 2.500-3M9.500 8l3 3M12.500 8l-3 3" stroke="#ff6a3d" stroke-width="1.200" fill="none"/></svg>
<span class="t" style="left:648.2px;top:88.91px;font-size:9.4px;line-height:11.28px;color:#404040;transform:scaleX(0.944);">Manage libraries</span>
<svg class="a" style="left:723.5px;top:50.5px;" width="13" height="13" viewBox="0 0 17 16"><text x="0" y="13.500" font-size="15" font-weight="bold" fill="#1f7ae0" font-family="Liberation Sans, sans-serif" textLength="7.500" lengthAdjust="spacingAndGlyphs">§</text><text x="9.500" y="13.500" font-size="15" font-weight="bold" fill="#16882a" font-family="Liberation Sans, sans-serif" textLength="7.500" lengthAdjust="spacingAndGlyphs">§</text><path d="M5 7.500h6.500" stroke="#1a1a4a" stroke-width="2.200"/><path d="M6 7.500h3" stroke="#fff" stroke-width=".8"/></svg>
<span class="t" style="left:737.8px;top:51.41px;font-size:9.4px;line-height:11.28px;color:#404040;transform:scaleX(0.949);">Legal to Incoming requirements mapping</span>
<svg class="a" style="left:724.05px;top:70.25px;" width="11.5" height="11.5" viewBox="0 0 16 16"><rect x="1" y="3" width="14" height="10" fill="none" stroke="#c4c4c4" stroke-width="1.600"/><path d="M1 4.300h14" stroke="#c4c4c4" stroke-width="1.400"/><path d="M5.700 4v9M10.300 4v9" stroke="#c4c4c4" stroke-width="1.300"/></svg>
<span class="t" style="left:737.8px;top:70.21px;font-size:9.4px;line-height:11.28px;color:#bdbdbd;transform:scaleX(0.952);">Requirement traceability (legal)</span>
<svg class="a" style="left:723.55px;top:88.55px;" width="12.5" height="12.5" viewBox="0 0 16 16"><rect x="1" y="1" width="14" height="14" fill="#fff" stroke="#444" stroke-width="1.200"/><rect x="5" y="2.500" width="6" height="4" fill="#2a3fc0"/><circle cx="8" cy="9.500" r="2" fill="#d22"/><path d="M4 13h8" stroke="#444" stroke-width="1.300"/></svg>
<span class="t" style="left:737.8px;top:88.91px;font-size:9.4px;line-height:11.28px;color:#404040;transform:scaleX(0.939);">Impact Graph</span>
<div class="a " style="left:0px;top:121px;width:1128.5px;height:22.3px;background:#fafafa;"></div>
<div class="a " style="left:0px;top:142.58px;width:1128.5px;height:1px;background:#c8c8c8;"></div>
<div class="a " style="left:0.92px;top:123.33px;width:129.54px;height:20.76px;background:#f0f0f0;border:1px solid #c8c8c8;box-sizing:border-box;border-bottom:none;"></div>
<span class="t" style="left:8.21px;top:124.88px;font-size:12.2px;line-height:14.64px;color:#1c1c86;transform:scaleX(1);font-weight:bold;font-family:'Liberation Serif',serif;">B</span>
<div class="a " style="left:6.82px;top:135.55px;width:11.6px;height:1.9px;background:#0a0a0a;"></div>
<span class="t" style="left:22.39px;top:128.16px;font-size:8.9px;line-height:10.68px;color:#444;transform:scaleX(0.931);">Immobilizer (IMMO)-v2.0(1)</span>
<div class="a " style="left:130.46px;top:124.35px;width:128.73px;height:18.72px;background:#fff;border:1px solid #c8c8c8;box-sizing:border-box;"></div>
<span class="t" style="left:136.61px;top:125.7px;font-size:12.5px;line-height:15px;color:#111;transform:scaleX(1.05);font-weight:bold;">A</span>
<span class="t" style="left:151.52px;top:128.16px;font-size:8.9px;line-height:10.68px;color:#444;transform:scaleX(0.885);">Process Management Area...</span>
<div class="a " style="left:259.18px;top:124.35px;width:129.13px;height:18.72px;background:#fff;border:1px solid #c8c8c8;box-sizing:border-box;"></div>
<svg class="a" style="left:264.78px;top:127.1px;" width="12.21" height="12.21" viewBox="0 0 16 16"><circle cx="8" cy="8" r="6.800" fill="#dfefff" stroke="#3b7fd0" stroke-width="1.200"/><text x="4" y="12" font-size="10" font-weight="bold" fill="#d08020" font-family="Liberation Serif, serif">B</text></svg>
<span class="t" style="left:281.06px;top:128.16px;font-size:8.9px;line-height:10.68px;color:#444;transform:scaleX(0.884);">Process Management Area...</span>
<svg class="a" style="left:1107.36px;top:125.98px;" width="7.12" height="4.07" viewBox="0 0 7.12 4.07"><path d="M0 .500h7L3.500 4z" fill="#555"/></svg>
<svg class="a" style="left:1119.87px;top:123.44px;" width="7.12" height="7.12" viewBox="0 0 7.12 7.12"><path d="M.500 .500l6 6M6.500 .500l-6 6" stroke="#666" stroke-width="1"/></svg>
<div class="a " style="left:2.75px;top:147.04px;width:549.4px;height:17.3px;background:#f3f3f3;border:1px solid #dedede;box-sizing:border-box;"></div>
<span class="t" style="left:7.5px;top:147.05px;font-size:12.2px;line-height:14.64px;color:#1c1c86;transform:scaleX(1);font-weight:bold;font-family:'Liberation Serif',serif;">B</span>
<div class="a " style="left:6.11px;top:157.72px;width:11.6px;height:1.9px;background:#0a0a0a;"></div>
<span class="t" style="left:20.76px;top:150.2px;font-size:9.5px;line-height:11.4px;color:#222;transform:scaleX(1.004);font-weight:bold;">Baseline Architecture - Default(modified)</span>
<svg class="a" style="left:208.61px;top:153.86px;" width="4.48" height="2.65" viewBox="0 0 4.48 2.65"><path d="M0 0h4.400L2.200 2.600z" fill="#333"/></svg>
<div class="a " style="left:0.71px;top:164.34px;width:551.44px;height:216.24px;background:#fff;border:1px solid #c9c9c9;box-sizing:border-box;border-left:none;"></div>
<div class="a " style="left:1.22px;top:165.16px;width:547.17px;height:10.48px;background:#fbfbfb;"></div>
<div class="a " style="left:1.22px;top:175.44px;width:550.02px;height:1px;background:#bdbdbd;"></div>
<div class="a " style="left:215.44px;top:165.36px;width:1px;height:10.18px;background:#c4c4c4;"></div>
<div class="a " style="left:347.93px;top:165.36px;width:1px;height:10.18px;background:#c4c4c4;"></div>
<div class="a " style="left:384.77px;top:165.36px;width:1px;height:10.18px;background:#c4c4c4;"></div>
<div class="a " style="left:424.55px;top:165.36px;width:1px;height:10.18px;background:#c4c4c4;"></div>
<div class="a " style="left:459.66px;top:165.36px;width:1px;height:10.18px;background:#c4c4c4;"></div>
<div class="a " style="left:547.89px;top:165.36px;width:1px;height:10.18px;background:#c4c4c4;"></div>
<span class="t" style="left:1.22px;top:165.23px;font-size:8.7px;line-height:10.44px;color:#222;transform:scaleX(0.92);">ıme</span>
<span class="t" style="left:218.99px;top:165.23px;font-size:8.7px;line-height:10.44px;color:#222;transform:scaleX(0.92);">Type</span>
<span class="t" style="left:351.48px;top:165.23px;font-size:8.7px;line-height:10.44px;color:#222;transform:scaleX(0.92);">Part SID</span>
<span class="t" style="left:388.32px;top:165.23px;font-size:8.7px;line-height:10.44px;color:#222;transform:scaleX(0.92);">Status</span>
<span class="t" style="left:428.51px;top:165.23px;font-size:8.7px;line-height:10.44px;color:#222;transform:scaleX(0.92);">Version</span>
<span class="t" style="left:463.21px;top:165.23px;font-size:8.7px;line-height:10.44px;color:#222;transform:scaleX(0.92);">Home Library</span>
<div class="a " style="left:14.26px;top:189.27px;width:1px;height:191.31px;background:#dadada;"></div>
<div class="a " style="left:27.79px;top:215.73px;width:1px;height:8.14px;background:#dadada;"></div>
<div class="a " style="left:41.32px;top:228.96px;width:1px;height:151.62px;background:#dadada;"></div>
<div class="a " style="left:54.86px;top:255.42px;width:1px;height:76.83px;background:#dadada;"></div>
<div class="a " style="left:68.49px;top:269.67px;width:1px;height:22.39px;background:#dadada;"></div>
<div class="a " style="left:68.49px;top:310.37px;width:1px;height:8.65px;background:#dadada;"></div>
<div class="a " style="left:68.49px;top:337.34px;width:1px;height:22.18px;background:#dadada;"></div>
<div class="a " style="left:68.99px;top:277.92px;width:8.04px;height:1px;background:#dadada;"></div>
<div class="a " style="left:68.99px;top:291.55px;width:8.04px;height:1px;background:#dadada;"></div>
<div class="a " style="left:68.99px;top:318.52px;width:8.04px;height:1px;background:#dadada;"></div>
<div class="a " style="left:68.99px;top:345.49px;width:8.04px;height:1px;background:#dadada;"></div>
<div class="a " style="left:68.99px;top:359.02px;width:8.04px;height:1px;background:#dadada;"></div>
<svg class="a" style="left:-2.42px;top:179.31px;" width="6.92" height="6.92" viewBox="0 0 8 8"><rect x=".500" y=".500" width="7" height="7" rx=".600" fill="#f6f6f8" stroke="#b2b2b8" stroke-width=".9"/><path d="M2 4h4" stroke="#5570c8" stroke-width="1"/></svg>
<div class="a " style="left:4.64px;top:182.37px;width:3.8px;height:0.8px;background:#cfcfcf;"></div>
<span class="t" style="left:10.58px;top:177.29px;font-size:9.3px;line-height:11.16px;color:#1c1c86;transform:scaleX(1);font-weight:bold;font-family:'Liberation Serif',serif;">B</span>
<div class="a " style="left:9.24px;top:185.37px;width:9.4px;height:1.6px;background:#0a0a0a;"></div>
<span class="t" style="left:24.14px;top:177.85px;font-size:8.7px;line-height:10.44px;color:#303030;transform:scaleX(0.92);">Immobilizer (IMMO)-v2.0</span>
<span class="t" style="left:223.06px;top:177.85px;font-size:8.7px;line-height:10.44px;color:#303030;transform:scaleX(0.92);">Baseline Architecture</span>
<span class="t" style="left:392.39px;top:177.85px;font-size:8.7px;line-height:10.44px;color:#303030;transform:scaleX(0.92);">Work</span>
<span class="t" style="left:432.28px;top:177.85px;font-size:8.7px;line-height:10.44px;color:#303030;transform:scaleX(0.92);">(1)</span>
<span class="t" style="left:466.98px;top:177.85px;font-size:8.7px;line-height:10.44px;color:#303030;transform:scaleX(0.92);">/Immobilizer Exampl</span>
<svg class="a" style="left:11.18px;top:192.84px;" width="6.92" height="6.92" viewBox="0 0 8 8"><rect x=".500" y=".500" width="7" height="7" rx=".600" fill="#f6f6f8" stroke="#b2b2b8" stroke-width=".9"/><path d="M2 4h4M4 2v4" stroke="#5570c8" stroke-width="1"/></svg>
<div class="a " style="left:18.24px;top:195.9px;width:3.8px;height:0.8px;background:#cfcfcf;"></div>
<svg class="a" style="left:22.2px;top:190.96px;" width="10.68" height="10.68" viewBox="0 0 16 16"><path d="M0 14c0-3.500 1-6 3.500-6.500C2 6.500 2 3 4.500 3s2.500 3.500 1 4.500C8 8 8.500 10 8.500 14z" fill="#5b84c9"/><path d="M6 14c0-4 1-6.500 3.700-7C8 5.500 8.300 1.500 11 1.500s3 4 1.300 5.500C15 7.500 16 10 16 14z" fill="#2a4f9e"/></svg>
<span class="t" style="left:37.74px;top:191.38px;font-size:8.7px;line-height:10.44px;color:#303030;transform:scaleX(0.92);">Stakeholder Requirements Area</span>
<span class="t" style="left:223.06px;top:191.38px;font-size:8.7px;line-height:10.44px;color:#303030;transform:scaleX(0.92);">Stakeholder Requirements Area</span>
<span class="t" style="left:355.25px;top:191.38px;font-size:8.7px;line-height:10.44px;color:#303030;transform:scaleX(0.92);">SP06...</span>
<span class="t" style="left:392.39px;top:191.38px;font-size:8.7px;line-height:10.44px;color:#303030;transform:scaleX(0.92);">Work</span>
<span class="t" style="left:432.28px;top:191.38px;font-size:8.7px;line-height:10.44px;color:#303030;transform:scaleX(0.92);">(1)</span>
<span class="t" style="left:466.98px;top:191.38px;font-size:8.7px;line-height:10.44px;color:#303030;transform:scaleX(0.92);">/Training Example</span>
<svg class="a" style="left:11.18px;top:206.38px;" width="6.92" height="6.92" viewBox="0 0 8 8"><rect x=".500" y=".500" width="7" height="7" rx=".600" fill="#f6f6f8" stroke="#b2b2b8" stroke-width=".9"/><path d="M2 4h4" stroke="#5570c8" stroke-width="1"/></svg>
<div class="a " style="left:18.24px;top:209.44px;width:3.8px;height:0.8px;background:#cfcfcf;"></div>
<svg class="a" style="left:22.2px;top:204.49px;" width="10.68" height="10.68" viewBox="0 0 16 16"><path d="M1 4.500c2.500-1 5-1 7 .5 2-1.500 4.500-1.500 7-.5v8c-2.500-.8-5-.8-7 .5-2-1.300-4.500-1.300-7-.5z" fill="#fff" stroke="#4a4a4a" stroke-width="1.200"/><path d="M8 5v8" stroke="#4a4a4a" stroke-width="1"/></svg>
<span class="t" style="left:37.74px;top:204.92px;font-size:8.7px;line-height:10.44px;color:#303030;transform:scaleX(0.92);">Legal Requirement Level</span>
<span class="t" style="left:223.06px;top:204.92px;font-size:8.7px;line-height:10.44px;color:#303030;transform:scaleX(0.92);">Legal Requirement Level</span>
<span class="t" style="left:355.25px;top:204.92px;font-size:8.7px;line-height:10.44px;color:#303030;transform:scaleX(0.92);">SP06...</span>
<span class="t" style="left:392.39px;top:204.92px;font-size:8.7px;line-height:10.44px;color:#303030;transform:scaleX(0.92);">Work</span>
<span class="t" style="left:432.28px;top:204.92px;font-size:8.7px;line-height:10.44px;color:#303030;transform:scaleX(0.92);">(1)</span>
<span class="t" style="left:466.98px;top:204.92px;font-size:8.7px;line-height:10.44px;color:#303030;transform:scaleX(0.92);">/Training Example</span>
<svg class="a" style="left:24.78px;top:219.91px;" width="6.92" height="6.92" viewBox="0 0 8 8"><rect x=".500" y=".500" width="7" height="7" rx=".600" fill="#f6f6f8" stroke="#b2b2b8" stroke-width=".9"/><path d="M2 4h4" stroke="#5570c8" stroke-width="1"/></svg>
<div class="a " style="left:31.84px;top:222.97px;width:3.8px;height:0.8px;background:#cfcfcf;"></div>
<svg class="a" style="left:35.29px;top:217.52px;" width="11.7" height="11.7" viewBox="0 0 16 16"><circle cx="8" cy="6.800" r="6" fill="#2f62cf"/><path d="M4.500 3.500c1.500-1.500 3 0 2.500 1.500s-2 1.500-1.500 3 2 1 2.500 2.500" stroke="#a8d0ff" stroke-width="1.800" fill="none"/><path d="M10.500 3c1 1 .5 2.500 1.500 3.500" stroke="#a8d0ff" stroke-width="1.400" fill="none"/><path d="M8 12.800v2M4.500 15.200h7" stroke="#444" stroke-width="1"/></svg>
<span class="t" style="left:51.34px;top:218.45px;font-size:8.7px;line-height:10.44px;color:#303030;transform:scaleX(0.92);">Legal Requirement Area</span>
<span class="t" style="left:223.06px;top:218.45px;font-size:8.7px;line-height:10.44px;color:#303030;transform:scaleX(0.92);">Legal Requirement Area</span>
<span class="t" style="left:355.25px;top:218.45px;font-size:8.7px;line-height:10.44px;color:#303030;transform:scaleX(0.92);">SP06...</span>
<span class="t" style="left:392.39px;top:218.45px;font-size:8.7px;line-height:10.44px;color:#303030;transform:scaleX(0.92);">Work</span>
<span class="t" style="left:432.28px;top:218.45px;font-size:8.7px;line-height:10.44px;color:#303030;transform:scaleX(0.92);">(1)</span>
<span class="t" style="left:466.98px;top:218.45px;font-size:8.7px;line-height:10.44px;color:#303030;transform:scaleX(0.92);">/Training Example</span>
<svg class="a" style="left:38.38px;top:233.44px;" width="6.92" height="6.92" viewBox="0 0 8 8"><rect x=".500" y=".500" width="7" height="7" rx=".600" fill="#f6f6f8" stroke="#b2b2b8" stroke-width=".9"/><path d="M2 4h4M4 2v4" stroke="#5570c8" stroke-width="1"/></svg>
<div class="a " style="left:45.44px;top:236.5px;width:3.8px;height:0.8px;background:#cfcfcf;"></div>
<svg class="a" style="left:48.64px;top:230.8px;" width="12.21" height="12.21" viewBox="0 0 16 16"><path d="M1.500 7c0-2.500 2-3.500 4-3.500h5c3 0 4 2 4 4V13h-13z" fill="#f01820"/><path d="M9 4.500l3.500-3.500 1.500 1.500-2 2.500z" fill="#f01820"/><path d="M4 8.500c1-1 2-1 2 0s-2 1-2 2 1 1 2 0" stroke="#fff" stroke-width=".8" fill="none"/><rect x="6" y="13" width="4" height="2" fill="#c01018"/></svg>
<span class="t" style="left:64.94px;top:231.98px;font-size:8.7px;line-height:10.44px;color:#303030;transform:scaleX(0.92);">Legal Inbox</span>
<span class="t" style="left:223.06px;top:231.98px;font-size:8.7px;line-height:10.44px;color:#303030;transform:scaleX(0.92);">Legal Inbox</span>
<span class="t" style="left:355.25px;top:231.98px;font-size:8.7px;line-height:10.44px;color:#303030;transform:scaleX(0.92);">SP06...</span>
<span class="t" style="left:392.39px;top:231.98px;font-size:8.7px;line-height:10.44px;color:#303030;transform:scaleX(0.92);">Work</span>
<span class="t" style="left:432.28px;top:231.98px;font-size:8.7px;line-height:10.44px;color:#303030;transform:scaleX(0.92);">(1)</span>
<span class="t" style="left:466.98px;top:231.98px;font-size:8.7px;line-height:10.44px;color:#303030;transform:scaleX(0.92);">/Training Example</span>
<svg class="a" style="left:38.38px;top:246.98px;" width="6.92" height="6.92" viewBox="0 0 8 8"><rect x=".500" y=".500" width="7" height="7" rx=".600" fill="#f6f6f8" stroke="#b2b2b8" stroke-width=".9"/><path d="M2 4h4" stroke="#5570c8" stroke-width="1"/></svg>
<div class="a " style="left:45.44px;top:250.04px;width:3.8px;height:0.8px;background:#cfcfcf;"></div>
<svg class="a" style="left:49.4px;top:245.1px;" width="10.68" height="10.68" viewBox="0 0 16 16"><circle cx="8" cy="8" r="6.300" fill="#3f74e6"/><path d="M3.500 5.500c1.500-2.500 4.500-2 4 0s-2.500 1.500-2.500 3.500 2.500 2.500 4.500 1.500 2.500-3.500 1-5" fill="#5fd05a"/><circle cx="8" cy="8" r="6.300" fill="none" stroke="#6a45c8" stroke-width="1.500"/></svg>
<span class="t" style="left:64.94px;top:245.52px;font-size:8.7px;line-height:10.44px;color:#303030;transform:scaleX(0.92);">Immobilzier Legal Requirement Group</span>
<span class="t" style="left:223.06px;top:245.52px;font-size:8.7px;line-height:10.44px;color:#303030;transform:scaleX(0.92);">Legal Requirement Group</span>
<span class="t" style="left:355.25px;top:245.52px;font-size:8.7px;line-height:10.44px;color:#303030;transform:scaleX(0.92);">SP06...</span>
<span class="t" style="left:392.39px;top:245.52px;font-size:8.7px;line-height:10.44px;color:#303030;transform:scaleX(0.92);">Work</span>
<span class="t" style="left:432.28px;top:245.52px;font-size:8.7px;line-height:10.44px;color:#303030;transform:scaleX(0.92);">(1)</span>
<span class="t" style="left:466.98px;top:245.52px;font-size:8.7px;line-height:10.44px;color:#303030;transform:scaleX(0.92);">/Training Example</span>
<svg class="a" style="left:51.98px;top:260.51px;" width="6.92" height="6.92" viewBox="0 0 8 8"><rect x=".500" y=".500" width="7" height="7" rx=".600" fill="#f6f6f8" stroke="#b2b2b8" stroke-width=".9"/><path d="M2 4h4" stroke="#5570c8" stroke-width="1"/></svg>
<div class="a " style="left:59.04px;top:263.57px;width:3.8px;height:0.8px;background:#cfcfcf;"></div>
<svg class="a" style="left:63px;top:258.63px;" width="10.68" height="10.68" viewBox="0 0 16 16"><circle cx="8" cy="8" r="6.300" fill="#3f74e6"/><path d="M3.500 5.500c1.500-2.500 4.500-2 4 0s-2.500 1.500-2.500 3.500 2.500 2.500 4.500 1.500 2.500-3.500 1-5" fill="#5fd05a"/><circle cx="8" cy="8" r="6.300" fill="none" stroke="#6a45c8" stroke-width="1.500"/></svg>
<span class="t" style="left:78.54px;top:259.05px;font-size:8.7px;line-height:10.44px;color:#303030;transform:scaleX(0.92);">Europe</span>
<span class="t" style="left:223.06px;top:259.05px;font-size:8.7px;line-height:10.44px;color:#303030;transform:scaleX(0.92);">Legal Requirement Group</span>
<span class="t" style="left:355.25px;top:259.05px;font-size:8.7px;line-height:10.44px;color:#303030;transform:scaleX(0.92);">SP06...</span>
<span class="t" style="left:392.39px;top:259.05px;font-size:8.7px;line-height:10.44px;color:#303030;transform:scaleX(0.92);">Work</span>
<span class="t" style="left:432.28px;top:259.05px;font-size:8.7px;line-height:10.44px;color:#303030;transform:scaleX(0.92);">(1)</span>
<span class="t" style="left:466.98px;top:259.05px;font-size:8.7px;line-height:10.44px;color:#303030;transform:scaleX(0.92);">/Training Example</span>
<span class="t" style="left:79.27px;top:271.45px;font-size:9.6px;line-height:11.52px;color:#111;transform:scaleX(1);font-weight:bold;">§</span>
<span class="t" style="left:92.14px;top:272.59px;font-size:8.7px;line-height:10.44px;color:#303030;transform:scaleX(0.92);">UN Regulation No.97 (ECE R97)</span>
<span class="t" style="left:223.06px;top:272.59px;font-size:8.7px;line-height:10.44px;color:#303030;transform:scaleX(0.92);">Legal Requirement</span>
<span class="t" style="left:355.25px;top:272.59px;font-size:8.7px;line-height:10.44px;color:#303030;transform:scaleX(0.92);">SP06...</span>
<span class="t" style="left:392.39px;top:272.59px;font-size:8.7px;line-height:10.44px;color:#303030;transform:scaleX(0.92);">Work</span>
<span class="t" style="left:432.28px;top:272.59px;font-size:8.7px;line-height:10.44px;color:#303030;transform:scaleX(0.92);">(1)</span>
<span class="t" style="left:466.98px;top:272.59px;font-size:8.7px;line-height:10.44px;color:#303030;transform:scaleX(0.92);">/Training Example</span>
<span class="t" style="left:79.27px;top:284.98px;font-size:9.6px;line-height:11.52px;color:#111;transform:scaleX(1);font-weight:bold;">§</span>
<span class="t" style="left:92.14px;top:286.12px;font-size:8.7px;line-height:10.44px;color:#303030;transform:scaleX(0.92);">UNECE Regulation No.155</span>
<span class="t" style="left:223.06px;top:286.12px;font-size:8.7px;line-height:10.44px;color:#303030;transform:scaleX(0.92);">Legal Requirement</span>
<span class="t" style="left:355.25px;top:286.12px;font-size:8.7px;line-height:10.44px;color:#303030;transform:scaleX(0.92);">SP06...</span>
<span class="t" style="left:392.39px;top:286.12px;font-size:8.7px;line-height:10.44px;color:#303030;transform:scaleX(0.92);">Work</span>
<span class="t" style="left:432.28px;top:286.12px;font-size:8.7px;line-height:10.44px;color:#303030;transform:scaleX(0.92);">(1)</span>
<span class="t" style="left:466.98px;top:286.12px;font-size:8.7px;line-height:10.44px;color:#303030;transform:scaleX(0.92);">/Training Example</span>
<svg class="a" style="left:51.98px;top:301.11px;" width="6.92" height="6.92" viewBox="0 0 8 8"><rect x=".500" y=".500" width="7" height="7" rx=".600" fill="#f6f6f8" stroke="#b2b2b8" stroke-width=".9"/><path d="M2 4h4" stroke="#5570c8" stroke-width="1"/></svg>
<div class="a " style="left:59.04px;top:304.17px;width:3.8px;height:0.8px;background:#cfcfcf;"></div>
<svg class="a" style="left:63px;top:299.23px;" width="10.68" height="10.68" viewBox="0 0 16 16"><circle cx="8" cy="8" r="6.300" fill="#3f74e6"/><path d="M3.500 5.500c1.500-2.500 4.500-2 4 0s-2.500 1.500-2.500 3.500 2.500 2.500 4.500 1.500 2.500-3.500 1-5" fill="#5fd05a"/><circle cx="8" cy="8" r="6.300" fill="none" stroke="#6a45c8" stroke-width="1.500"/></svg>
<span class="t" style="left:78.54px;top:299.65px;font-size:8.7px;line-height:10.44px;color:#303030;transform:scaleX(0.92);">USA</span>
<span class="t" style="left:223.06px;top:299.65px;font-size:8.7px;line-height:10.44px;color:#303030;transform:scaleX(0.92);">Legal Requirement Group</span>
<span class="t" style="left:355.25px;top:299.65px;font-size:8.7px;line-height:10.44px;color:#303030;transform:scaleX(0.92);">SP06...</span>
<span class="t" style="left:392.39px;top:299.65px;font-size:8.7px;line-height:10.44px;color:#303030;transform:scaleX(0.92);">Work</span>
<span class="t" style="left:432.28px;top:299.65px;font-size:8.7px;line-height:10.44px;color:#303030;transform:scaleX(0.92);">(1)</span>
<span class="t" style="left:466.98px;top:299.65px;font-size:8.7px;line-height:10.44px;color:#303030;transform:scaleX(0.92);">/Training Example</span>
<span class="t" style="left:79.27px;top:312.05px;font-size:9.6px;line-height:11.52px;color:#111;transform:scaleX(1);font-weight:bold;">§</span>
<span class="t" style="left:92.14px;top:313.19px;font-size:8.7px;line-height:10.44px;color:#303030;transform:scaleX(0.92);">FMVSS No.114</span>
<span class="t" style="left:223.06px;top:313.19px;font-size:8.7px;line-height:10.44px;color:#303030;transform:scaleX(0.92);">Legal Requirement</span>
<span class="t" style="left:355.25px;top:313.19px;font-size:8.7px;line-height:10.44px;color:#303030;transform:scaleX(0.92);">SP06...</span>
<span class="t" style="left:392.39px;top:313.19px;font-size:8.7px;line-height:10.44px;color:#303030;transform:scaleX(0.92);">Work</span>
<span class="t" style="left:432.28px;top:313.19px;font-size:8.7px;line-height:10.44px;color:#303030;transform:scaleX(0.92);">(2)</span>
<span class="t" style="left:466.98px;top:313.19px;font-size:8.7px;line-height:10.44px;color:#303030;transform:scaleX(0.92);">/Training Example</span>
<svg class="a" style="left:51.98px;top:328.18px;" width="6.92" height="6.92" viewBox="0 0 8 8"><rect x=".500" y=".500" width="7" height="7" rx=".600" fill="#f6f6f8" stroke="#b2b2b8" stroke-width=".9"/><path d="M2 4h4" stroke="#5570c8" stroke-width="1"/></svg>
<div class="a " style="left:59.04px;top:331.24px;width:3.8px;height:0.8px;background:#cfcfcf;"></div>
<svg class="a" style="left:63px;top:326.3px;" width="10.68" height="10.68" viewBox="0 0 16 16"><circle cx="8" cy="8" r="6.300" fill="#3f74e6"/><path d="M3.500 5.500c1.500-2.500 4.500-2 4 0s-2.500 1.500-2.500 3.500 2.500 2.500 4.500 1.500 2.500-3.500 1-5" fill="#5fd05a"/><circle cx="8" cy="8" r="6.300" fill="none" stroke="#6a45c8" stroke-width="1.500"/></svg>
<span class="t" style="left:78.54px;top:326.72px;font-size:8.7px;line-height:10.44px;color:#303030;transform:scaleX(0.92);">Global Standards</span>
<span class="t" style="left:223.06px;top:326.72px;font-size:8.7px;line-height:10.44px;color:#303030;transform:scaleX(0.92);">Legal Requirement Group</span>
<span class="t" style="left:355.25px;top:326.72px;font-size:8.7px;line-height:10.44px;color:#303030;transform:scaleX(0.92);">SP06...</span>
<span class="t" style="left:392.39px;top:326.72px;font-size:8.7px;line-height:10.44px;color:#303030;transform:scaleX(0.92);">Work</span>
<span class="t" style="left:432.28px;top:326.72px;font-size:8.7px;line-height:10.44px;color:#303030;transform:scaleX(0.92);">(1)</span>
<span class="t" style="left:466.98px;top:326.72px;font-size:8.7px;line-height:10.44px;color:#303030;transform:scaleX(0.92);">/Training Example</span>
<div class="a " style="left:1.22px;top:338.58px;width:214.41px;height:13px;background:#8ec3ea;border:1px solid #6aa7d6;box-sizing:border-box;"></div>
<span class="t" style="left:79.27px;top:339.12px;font-size:9.6px;line-height:11.52px;color:#111;transform:scaleX(1);font-weight:bold;">§</span>
<span class="t" style="left:92.14px;top:340.26px;font-size:8.7px;line-height:10.44px;color:#303030;transform:scaleX(0.92);">ISO/SAE 21434</span>
<span class="t" style="left:223.06px;top:340.26px;font-size:8.7px;line-height:10.44px;color:#303030;transform:scaleX(0.92);">Legal Requirement</span>
<span class="t" style="left:355.25px;top:340.26px;font-size:8.7px;line-height:10.44px;color:#303030;transform:scaleX(0.92);">SP06...</span>
<span class="t" style="left:392.39px;top:340.26px;font-size:8.7px;line-height:10.44px;color:#303030;transform:scaleX(0.92);">Work</span>
<span class="t" style="left:432.28px;top:340.26px;font-size:8.7px;line-height:10.44px;color:#303030;transform:scaleX(0.92);">(1)</span>
<span class="t" style="left:466.98px;top:340.26px;font-size:8.7px;line-height:10.44px;color:#303030;transform:scaleX(0.92);">/Training Example</span>
<span class="t" style="left:79.27px;top:352.65px;font-size:9.6px;line-height:11.52px;color:#111;transform:scaleX(1);font-weight:bold;">§</span>
<span class="t" style="left:92.14px;top:353.79px;font-size:8.7px;line-height:10.44px;color:#303030;transform:scaleX(0.92);">ISO 26262</span>
<span class="t" style="left:223.06px;top:353.79px;font-size:8.7px;line-height:10.44px;color:#303030;transform:scaleX(0.92);">Legal Requirement</span>
<span class="t" style="left:355.25px;top:353.79px;font-size:8.7px;line-height:10.44px;color:#303030;transform:scaleX(0.92);">SP06...</span>
<span class="t" style="left:392.39px;top:353.79px;font-size:8.7px;line-height:10.44px;color:#303030;transform:scaleX(0.92);">Work</span>
<span class="t" style="left:432.28px;top:353.79px;font-size:8.7px;line-height:10.44px;color:#303030;transform:scaleX(0.92);">(1)</span>
<span class="t" style="left:466.98px;top:353.79px;font-size:8.7px;line-height:10.44px;color:#303030;transform:scaleX(0.92);">/Training Example</span>
<svg class="a" style="left:38.38px;top:368.79px;" width="6.92" height="6.92" viewBox="0 0 8 8"><rect x=".500" y=".500" width="7" height="7" rx=".600" fill="#f6f6f8" stroke="#b2b2b8" stroke-width=".9"/><path d="M2 4h4" stroke="#5570c8" stroke-width="1"/></svg>
<div class="a " style="left:45.44px;top:371.85px;width:3.8px;height:0.8px;background:#cfcfcf;"></div>
<svg class="a" style="left:49.14px;top:366.65px;" width="11.19" height="11.19" viewBox="0 0 16 16"><rect x="1" y="1.500" width="14" height="13" fill="#f7d774" stroke="#c8962a" stroke-width="1"/><path d="M3.500 5h3M9 5h3.500M3.500 8h3M9 8h3.500M3.500 11h3M9 11h3.500" stroke="#8a6a10" stroke-width="1.300"/><path d="M6.500 5l2.500 3M6.500 11l2.500-3" stroke="#d04a20" stroke-width=".9"/></svg>
<span class="t" style="left:64.94px;top:367.33px;font-size:8.7px;line-height:10.44px;color:#303030;transform:scaleX(0.92);">Legal Mapping Area</span>
<span class="t" style="left:223.06px;top:367.33px;font-size:8.7px;line-height:10.44px;color:#303030;transform:scaleX(0.92);">Mapping container</span>
<span class="t" style="left:355.25px;top:367.33px;font-size:8.7px;line-height:10.44px;color:#303030;transform:scaleX(0.92);">SP06...</span>
<span class="t" style="left:392.39px;top:367.33px;font-size:8.7px;line-height:10.44px;color:#303030;transform:scaleX(0.92);">Work</span>
<span class="t" style="left:432.28px;top:367.33px;font-size:8.7px;line-height:10.44px;color:#303030;transform:scaleX(0.92);">(1)</span>
<span class="t" style="left:466.98px;top:367.33px;font-size:8.7px;line-height:10.44px;color:#303030;transform:scaleX(0.92);">/Training Example</span>
<div class="a " style="left:540.04px;top:176.55px;width:11.5px;height:204.03px;background:#f7f7f7;"></div>
<div class="a " style="left:544.52px;top:188.26px;width:1.73px;height:110.92px;background:#5a5a5a;"></div>
<span class="t" style="left:554.34px;top:357.98px;font-size:8px;line-height:9.6px;color:#333;transform:scaleX(1);">⋮</span>
<div class="a " style="left:563.24px;top:144.5px;width:563.96px;height:236.08px;background:#f7f7f7;border:1px solid #d6d6d6;box-sizing:border-box;"></div>
<div class="a " style="left:564.26px;top:145.52px;width:561.92px;height:18.83px;background:#eeeeee;"></div>
<div class="a " style="left:567.62px;top:149.38px;width:5.5px;height:5.5px;border:1.200px solid #5548ff;box-sizing:border-box;"></div>
<div class="a " style="left:574.34px;top:149.38px;width:5.5px;height:5.5px;border:1.200px solid #ff6a3d;box-sizing:border-box;"></div>
<div class="a " style="left:567.62px;top:156.1px;width:5.5px;height:5.5px;border:1.200px solid #ff6a3d;box-sizing:border-box;"></div>
<div class="a " style="left:574.34px;top:156.1px;width:5.5px;height:5.5px;border:1.200px solid #5548ff;box-sizing:border-box;"></div>
<span class="t" style="left:582.78px;top:150.6px;font-size:9.5px;line-height:11.4px;color:#222;transform:scaleX(1.024);font-weight:bold;">Overview</span>
<svg class="a" style="left:629.39px;top:154.17px;" width="4.48" height="2.65" viewBox="0 0 4.48 2.65"><path d="M0 0h4.400L2.200 2.600z" fill="#333"/></svg>
<span class="t" style="left:675.33px;top:150.29px;font-size:9px;line-height:10.8px;color:#444;transform:scaleX(1);">|</span>
<span class="t" style="left:719.45px;top:150.05px;font-size:9.4px;line-height:11.28px;color:#222;transform:scaleX(0.877);">ISO/SAE 21434</span>
<span class="t" style="left:994.56px;top:150.29px;font-size:9px;line-height:10.8px;color:#444;transform:scaleX(1);">|</span>
<span class="t" style="left:1041.72px;top:150.05px;font-size:9.4px;line-height:11.28px;color:#333;transform:scaleX(0.965);">Legal Requirement</span>
<div class="a " style="left:565.79px;top:164.14px;width:559.38px;height:29.41px;background:#fff;border:1px solid #c9c9c9;box-sizing:border-box;"></div>
<div class="a " style="left:566.5px;top:164.85px;width:462.3px;height:15.16px;background:#f6f6f6;"></div>
<div class="a " style="left:565.99px;top:179.51px;width:462.81px;height:1px;background:#d4d4d4;"></div>
<div class="a " style="left:625.94px;top:165.36px;width:1px;height:27.98px;background:#d4d4d4;"></div>
<div class="a " style="left:714.06px;top:165.36px;width:1px;height:27.98px;background:#d4d4d4;"></div>
<div class="a " style="left:778.88px;top:165.36px;width:1px;height:27.98px;background:#d4d4d4;"></div>
<div class="a " style="left:840.55px;top:165.36px;width:1px;height:27.98px;background:#d4d4d4;"></div>
<div class="a " style="left:928.78px;top:165.36px;width:1px;height:27.98px;background:#d4d4d4;"></div>
<div class="a " style="left:992.17px;top:165.36px;width:1px;height:27.98px;background:#d4d4d4;"></div>
<div class="a " style="left:1028.3px;top:165.36px;width:1px;height:27.98px;background:#d4d4d4;"></div>
<span class="t" style="left:567.42px;top:167.02px;font-size:8.6px;line-height:10.32px;color:#444;transform:scaleX(0.93);">Last Changed</span>
<span class="t" style="left:566.81px;top:182.89px;font-size:8.6px;line-height:10.32px;color:#555;transform:scaleX(0.95);">2025-05-09</span>
<span class="t" style="left:628.07px;top:167.02px;font-size:8.6px;line-height:10.32px;color:#444;transform:scaleX(0.93);">Last Changed By</span>
<span class="t" style="left:627.45px;top:182.89px;font-size:8.6px;line-height:10.32px;color:#555;transform:scaleX(0.95);">Ahmad Masood</span>
<span class="t" style="left:716.19px;top:167.02px;font-size:8.6px;line-height:10.32px;color:#444;transform:scaleX(0.93);">Creation Date</span>
<span class="t" style="left:715.58px;top:182.89px;font-size:8.6px;line-height:10.32px;color:#555;transform:scaleX(0.95);">2025-04-23</span>
<span class="t" style="left:781.01px;top:167.02px;font-size:8.6px;line-height:10.32px;color:#444;transform:scaleX(0.93);">Access</span>
<span class="t" style="left:780.4px;top:182.89px;font-size:8.6px;line-height:10.32px;color:#555;transform:scaleX(0.95);">Read/Write</span>
<span class="t" style="left:842.68px;top:167.02px;font-size:8.6px;line-height:10.32px;color:#444;transform:scaleX(0.93);">Owner</span>
<span class="t" style="left:842.07px;top:182.89px;font-size:8.6px;line-height:10.32px;color:#555;transform:scaleX(0.95);">Ahmad Masood</span>
<span class="t" style="left:930.9px;top:167.02px;font-size:8.6px;line-height:10.32px;color:#444;transform:scaleX(0.93);">Status</span>
<span class="t" style="left:930.29px;top:182.89px;font-size:8.6px;line-height:10.32px;color:#111;transform:scaleX(0.95);">Work</span>
<span class="t" style="left:994.3px;top:167.02px;font-size:8.6px;line-height:10.32px;color:#444;transform:scaleX(0.93);">Version</span>
<span class="t" style="left:993.69px;top:182.89px;font-size:8.6px;line-height:10.32px;color:#555;transform:scaleX(0.95);">(1)</span>
<span class="t" style="left:582.17px;top:198.31px;font-size:9.2px;line-height:11.04px;color:#111;transform:scaleX(0.972);font-weight:bold;">Attributes</span>
<svg class="a" style="left:1113.26px;top:198.43px;" width="6.11" height="7.12" viewBox="0 0 6.11 7.12"><path d="M.500 3L3 .700 5.500 3M.500 6.300L3 4l2.500 2.300" fill="none" stroke="#222" stroke-width="1"/></svg>
<span class="t" style="left:580.75px;top:215.43px;font-size:8.3px;line-height:9.96px;color:#222;transform:scaleX(0.948);">Default</span>
<div class="a " style="left:612.5px;top:218.9px;width:504.83px;height:1px;background:#f4a58a;"></div>
<span class="t" style="left:620.68px;top:230.37px;font-size:8.5px;line-height:10.2px;color:#222;transform:scaleX(0.93);">Requirement ID:</span>
<div class="a " style="left:682.3px;top:229.37px;width:132.49px;height:11.91px;background:#fff;border:1px solid #b9b9b9;box-sizing:border-box;"></div>
<div class="a " style="left:815.3px;top:229.37px;width:14.25px;height:11.91px;background:#f3f3f3;border:1px solid #d6d6d6;box-sizing:border-box;"></div>
<span class="t" style="left:819.51px;top:229.85px;font-size:7px;line-height:8.4px;color:#777;transform:scaleX(1);">...</span>
<span class="t" style="left:685.05px;top:230.37px;font-size:8.5px;line-height:10.2px;color:#222;transform:scaleX(0.95);">226</span>
<span class="t" style="left:646.59px;top:245.74px;font-size:8.5px;line-height:10.2px;color:#222;transform:scaleX(0.93);">Purpose:</span>
<div class="a " style="left:682.3px;top:244.73px;width:147.25px;height:15.98px;background:#fff;border:1px solid #b9b9b9;box-sizing:border-box;"></div>
<span class="t" style="left:608.8px;top:264.46px;font-size:8.5px;line-height:10.2px;color:#222;transform:scaleX(0.93);">Verification method:</span>
<div class="a " style="left:682.3px;top:263.46px;width:147.25px;height:12.62px;background:#fff;border:1px solid #b9b9b9;box-sizing:border-box;"></div>
<svg class="a" style="left:819.88px;top:268.24px;" width="4.88" height="3.46" viewBox="0 0 4.88 3.46"><path d="M.4 .4l2.04 1.64 2.04 -1.64" fill="none" stroke="#555" stroke-width="1.2"/></svg>
<span class="t" style="left:640.45px;top:280.13px;font-size:8.5px;line-height:10.2px;color:#222;transform:scaleX(0.93);">Legacy ID:</span>
<div class="a " style="left:682.3px;top:279.13px;width:147.25px;height:12.62px;background:#fff;border:1px solid #b9b9b9;box-sizing:border-box;"></div>
<span class="t" style="left:582.17px;top:296.71px;font-size:9.2px;line-height:11.04px;color:#111;transform:scaleX(0.921);font-weight:bold;">Description</span>
<svg class="a" style="left:1113.26px;top:298.16px;" width="6.11" height="7.12" viewBox="0 0 6.11 7.12"><path d="M.500 3L3 .700 5.500 3M.500 6.300L3 4l2.500 2.300" fill="none" stroke="#222" stroke-width="1"/></svg>
<div class="a " style="left:565.79px;top:310.06px;width:559.38px;height:70.52px;background:#fff;border:1px solid #c9c9c9;box-sizing:border-box;"></div>
<span class="t" style="left:570.27px;top:314.61px;font-size:9.55px;line-height:11.46px;color:#111;transform:scaleX(1.008);">The system shall be developed using a structured approach to manage cybersecurity risks throughout the</span>
<span class="t" style="left:570.27px;top:325.81px;font-size:9.55px;line-height:11.46px;color:#111;transform:scaleX(1);">lifecycle.</span>
<div class="a " style="left:1060.85px;top:310.88px;width:0.81px;height:69.71px;border-left:1px dotted #999;"></div>
<div class="a " style="left:1117.53px;top:323.09px;width:1.83px;height:57.49px;background:#555;"></div>
</div>
</body></html>
